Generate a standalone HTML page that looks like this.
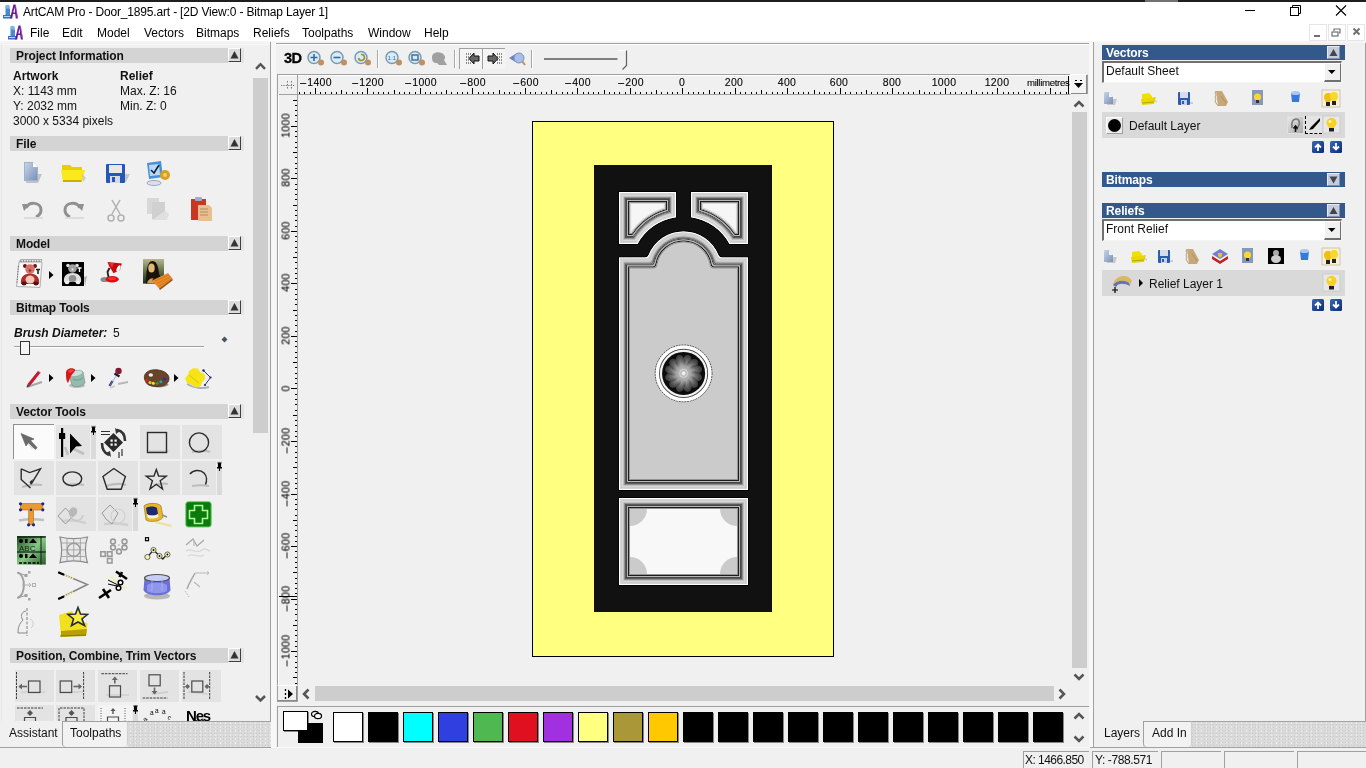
<!DOCTYPE html><html><head><meta charset="utf-8"><style>
*{margin:0;padding:0;box-sizing:border-box}
html,body{width:1366px;height:768px;overflow:hidden;background:#f0f0f0;font-family:"Liberation Sans",sans-serif}
.t{position:absolute;white-space:nowrap;will-change:transform}
svg{overflow:visible}
</style></head><body><div style="position:absolute;left:0px;top:0px;width:1366px;height:2px;background:#1e1e1e"></div>
<div style="position:absolute;left:1145px;top:0px;width:33px;height:2px;background:#707070"></div>
<div style="position:absolute;left:0px;top:2px;width:1366px;height:39px;background:#ffffff"></div>
<svg style="position:absolute;left:2px;top:3px;" width="16" height="16" viewBox="0 0 16 16">
    <ellipse cx="5.5" cy="4" rx="2.5" ry="2.2" fill="#7ab8e0"/>
    <rect x="3.5" y="5.5" width="4.5" height="7" fill="#4a88d0"/>
    <rect x="1" y="12" width="8.5" height="3.5" fill="#3a70c0"/>
    <rect x="2" y="13" width="6.5" height="1" fill="#b0d8f8"/>
    <path d="M8 15.5 L11.5 1.5 L13.5 1.5 L16 15.5 L13.8 15.5 L13.2 11 L11 11 L10.2 15.5 Z" fill="#6a1a90"/>
    <path d="M11.3 9.5 L12.5 4 L13 9.5 Z" fill="#fff"/>
    <path d="M13.5 2 L15.5 15" stroke="#b050d0" stroke-width=".7"/>
    </svg>
<div class="t" style="left:23px;top:6.34px;font-size:12px;line-height:12px;font-weight:normal;font-style:normal;color:#000;letter-spacing:-0.17px;color:#000">ArtCAM Pro - Door_1895.art - [2D View:0 - Bitmap Layer 1]</div>
<svg style="position:absolute;left:1240px;top:2px;" width="126" height="18" viewBox="0 0 126 18">
      <rect x="5" y="8" width="10" height="1" fill="#000"/>
      <rect x="50.5" y="5.5" width="8" height="8" fill="none" stroke="#000" stroke-width="1"/>
      <path d="M52.5 5.5 V3.5 H60.5 V11.5 H58.5" fill="none" stroke="#000" stroke-width="1"/>
      <path d="M96 3.5 L106 13.5 M106 3.5 L96 13.5" stroke="#000" stroke-width="1.1"/>
    </svg>
<svg style="position:absolute;left:7px;top:24px;" width="16" height="16" viewBox="0 0 16 16">
    <ellipse cx="5.5" cy="4" rx="2.5" ry="2.2" fill="#7ab8e0"/>
    <rect x="3.5" y="5.5" width="4.5" height="7" fill="#4a88d0"/>
    <rect x="1" y="12" width="8.5" height="3.5" fill="#3a70c0"/>
    <rect x="2" y="13" width="6.5" height="1" fill="#b0d8f8"/>
    <path d="M8 15.5 L11.5 1.5 L13.5 1.5 L16 15.5 L13.8 15.5 L13.2 11 L11 11 L10.2 15.5 Z" fill="#6a1a90"/>
    <path d="M11.3 9.5 L12.5 4 L13 9.5 Z" fill="#fff"/>
    <path d="M13.5 2 L15.5 15" stroke="#b050d0" stroke-width=".7"/>
    </svg>
<div class="t" style="left:30.2px;top:27.34px;font-size:12px;line-height:12px;font-weight:normal;font-style:normal;color:#000;">File</div>
<div class="t" style="left:62.4px;top:27.34px;font-size:12px;line-height:12px;font-weight:normal;font-style:normal;color:#000;">Edit</div>
<div class="t" style="left:96.6px;top:27.34px;font-size:12px;line-height:12px;font-weight:normal;font-style:normal;color:#000;">Model</div>
<div class="t" style="left:144px;top:27.34px;font-size:12px;line-height:12px;font-weight:normal;font-style:normal;color:#000;">Vectors</div>
<div class="t" style="left:196.2px;top:27.34px;font-size:12px;line-height:12px;font-weight:normal;font-style:normal;color:#000;">Bitmaps</div>
<div class="t" style="left:253.3px;top:27.34px;font-size:12px;line-height:12px;font-weight:normal;font-style:normal;color:#000;">Reliefs</div>
<div class="t" style="left:301.6px;top:27.34px;font-size:12px;line-height:12px;font-weight:normal;font-style:normal;color:#000;">Toolpaths</div>
<div class="t" style="left:367.5px;top:27.34px;font-size:12px;line-height:12px;font-weight:normal;font-style:normal;color:#000;">Window</div>
<div class="t" style="left:424px;top:27.34px;font-size:12px;line-height:12px;font-weight:normal;font-style:normal;color:#000;">Help</div>
<div style="position:absolute;left:1309px;top:24px;width:18px;height:17px;border:1px solid #e6e6e6;background:#fff"></div>
<div style="position:absolute;left:1328px;top:24px;width:18px;height:17px;border:1px solid #e6e6e6;background:#fff"></div>
<div style="position:absolute;left:1347px;top:24px;width:18px;height:17px;border:1px solid #e6e6e6;background:#fff"></div>
<svg style="position:absolute;left:1309px;top:24px;" width="58" height="17" viewBox="0 0 58 17">
      <rect x="5" y="11" width="6" height="2" fill="#707070"/>
      <rect x="23" y="8" width="6" height="4" fill="none" stroke="#707070" stroke-width="1.2"/>
      <path d="M25 7 V5 H31 V9 H30" fill="none" stroke="#707070" stroke-width="1.2"/>
      <path d="M44.5 4.5 L50.5 10.5 M50.5 4.5 L44.5 10.5" stroke="#707070" stroke-width="2"/>
    </svg>
<div style="position:absolute;left:0px;top:41px;width:1366px;height:2px;background:#f5f5f5"></div>
<svg width="0" height="0" style="position:absolute"><defs><linearGradient id="gblue" x1="0" y1="0" x2="1" y2="1"><stop offset="0" stop-color="#c8d4e8"/><stop offset="1" stop-color="#7890b8"/></linearGradient></defs></svg>
<div style="position:absolute;left:1px;top:44px;width:269px;height:677px;background:#f0f0f0;border-left:1px solid #e6e6e6;border-top:1px solid #f8f8f8"></div>
<div style="position:absolute;left:270px;top:42px;width:1px;height:706px;background:#a0a0a0"></div>
<div style="position:absolute;left:10px;top:48px;width:218px;height:15px;background:#d4d4d4"></div>
<div class="t" style="left:15.5px;top:49.84px;font-size:12px;line-height:12px;font-weight:bold;font-style:normal;color:#111;letter-spacing:-0.12px">Project Information</div>
<div style="position:absolute;left:228px;top:48px;width:13px;height:14px;background:#dcdcdc;border-left:1px solid #fff;border-top:1px solid #fff;border-right:1px solid #404040;border-bottom:1px solid #404040"></div>
<div style="position:absolute;left:241px;top:48px;width:3px;height:15px;background:#e4e4e4"></div>
<svg style="position:absolute;left:0px;top:0px;" width="250" height="70" viewBox="0 0 250 70"><path d="M234.5 51 L238.5 58.5 L230.5 58.5 Z" fill="#333"/></svg>
<div style="position:absolute;left:10px;top:136px;width:218px;height:15px;background:#d4d4d4"></div>
<div class="t" style="left:15.5px;top:137.84px;font-size:12px;line-height:12px;font-weight:bold;font-style:normal;color:#111;letter-spacing:-0.12px">File</div>
<div style="position:absolute;left:228px;top:136px;width:13px;height:14px;background:#dcdcdc;border-left:1px solid #fff;border-top:1px solid #fff;border-right:1px solid #404040;border-bottom:1px solid #404040"></div>
<div style="position:absolute;left:241px;top:136px;width:3px;height:15px;background:#e4e4e4"></div>
<svg style="position:absolute;left:0px;top:88px;" width="250" height="70" viewBox="0 0 250 70"><path d="M234.5 51 L238.5 58.5 L230.5 58.5 Z" fill="#333"/></svg>
<div style="position:absolute;left:10px;top:236px;width:218px;height:15px;background:#d4d4d4"></div>
<div class="t" style="left:15.5px;top:237.84px;font-size:12px;line-height:12px;font-weight:bold;font-style:normal;color:#111;letter-spacing:-0.12px">Model</div>
<div style="position:absolute;left:228px;top:236px;width:13px;height:14px;background:#dcdcdc;border-left:1px solid #fff;border-top:1px solid #fff;border-right:1px solid #404040;border-bottom:1px solid #404040"></div>
<div style="position:absolute;left:241px;top:236px;width:3px;height:15px;background:#e4e4e4"></div>
<svg style="position:absolute;left:0px;top:188px;" width="250" height="70" viewBox="0 0 250 70"><path d="M234.5 51 L238.5 58.5 L230.5 58.5 Z" fill="#333"/></svg>
<div style="position:absolute;left:10px;top:300px;width:218px;height:15px;background:#d4d4d4"></div>
<div class="t" style="left:15.5px;top:301.84px;font-size:12px;line-height:12px;font-weight:bold;font-style:normal;color:#111;letter-spacing:-0.12px">Bitmap Tools</div>
<div style="position:absolute;left:228px;top:300px;width:13px;height:14px;background:#dcdcdc;border-left:1px solid #fff;border-top:1px solid #fff;border-right:1px solid #404040;border-bottom:1px solid #404040"></div>
<div style="position:absolute;left:241px;top:300px;width:3px;height:15px;background:#e4e4e4"></div>
<svg style="position:absolute;left:0px;top:252px;" width="250" height="70" viewBox="0 0 250 70"><path d="M234.5 51 L238.5 58.5 L230.5 58.5 Z" fill="#333"/></svg>
<div style="position:absolute;left:10px;top:404px;width:218px;height:15px;background:#d4d4d4"></div>
<div class="t" style="left:15.5px;top:405.84px;font-size:12px;line-height:12px;font-weight:bold;font-style:normal;color:#111;letter-spacing:-0.12px">Vector Tools</div>
<div style="position:absolute;left:228px;top:404px;width:13px;height:14px;background:#dcdcdc;border-left:1px solid #fff;border-top:1px solid #fff;border-right:1px solid #404040;border-bottom:1px solid #404040"></div>
<div style="position:absolute;left:241px;top:404px;width:3px;height:15px;background:#e4e4e4"></div>
<svg style="position:absolute;left:0px;top:356px;" width="250" height="70" viewBox="0 0 250 70"><path d="M234.5 51 L238.5 58.5 L230.5 58.5 Z" fill="#333"/></svg>
<div style="position:absolute;left:10px;top:648px;width:218px;height:15px;background:#d4d4d4"></div>
<div class="t" style="left:15.5px;top:649.84px;font-size:12px;line-height:12px;font-weight:bold;font-style:normal;color:#111;letter-spacing:-0.12px">Position, Combine, Trim Vectors</div>
<div style="position:absolute;left:228px;top:648px;width:13px;height:14px;background:#dcdcdc;border-left:1px solid #fff;border-top:1px solid #fff;border-right:1px solid #404040;border-bottom:1px solid #404040"></div>
<div style="position:absolute;left:241px;top:648px;width:3px;height:15px;background:#e4e4e4"></div>
<svg style="position:absolute;left:0px;top:600px;" width="250" height="70" viewBox="0 0 250 70"><path d="M234.5 51 L238.5 58.5 L230.5 58.5 Z" fill="#333"/></svg>
<div class="t" style="left:13px;top:69.84px;font-size:12px;line-height:12px;font-weight:bold;font-style:normal;color:#111;">Artwork</div>
<div class="t" style="left:13px;top:84.84px;font-size:12px;line-height:12px;font-weight:normal;font-style:normal;color:#111;">X: 1143 mm</div>
<div class="t" style="left:13px;top:99.84px;font-size:12px;line-height:12px;font-weight:normal;font-style:normal;color:#111;">Y: 2032 mm</div>
<div class="t" style="left:13px;top:114.84px;font-size:12px;line-height:12px;font-weight:normal;font-style:normal;color:#111;">3000 x 5334 pixels</div>
<div class="t" style="left:119.5px;top:69.84px;font-size:12px;line-height:12px;font-weight:bold;font-style:normal;color:#111;">Relief</div>
<div class="t" style="left:119.5px;top:84.84px;font-size:12px;line-height:12px;font-weight:normal;font-style:normal;color:#111;">Max. Z: 16</div>
<div class="t" style="left:119.5px;top:99.84px;font-size:12px;line-height:12px;font-weight:normal;font-style:normal;color:#111;">Min. Z: 0</div>
<div style="position:absolute;left:253px;top:78px;width:15px;height:355px;background:#cdcdcd"></div>
<svg style="position:absolute;left:255px;top:60px;" width="12" height="10" viewBox="0 0 12 10"><path d="M1 8.8 L5.5 4.2 L10 8.8" stroke="#555" stroke-width="2.5" fill="none"/></svg>
<svg style="position:absolute;left:255px;top:694px;" width="12" height="10" viewBox="0 0 12 10"><path d="M1 2 L5.5 6.5 L10 2" stroke="#555" stroke-width="2.5" fill="none"/></svg>
<svg style="position:absolute;left:20px;top:160px;" width="26" height="26" viewBox="0 0 26 26"><path d="M4 2 H13 L18 7 V21 H4 Z" fill="#9fb2cf"/><path d="M5 3 H12 V8 H17 V20 H5Z" fill="url(#gblue)"/>
<path d="M13 2 L18 7 H13Z" fill="#fff"/><path d="M18 14 H22 L18 23 H6 V21 H18Z" fill="#b8b8b8" opacity=".8"/></svg>
<svg style="position:absolute;left:60px;top:160px;" width="26" height="26" viewBox="0 0 26 26"><path d="M2 5 H10 L12 7 H22 V12 H2Z" fill="#e8d000"/><path d="M1 10 H25 L22 22 H3Z" fill="#f8e81c"/>
<path d="M3 20 H22 L21 22 H3Z" fill="#c8b000"/><path d="M22 14 L26 18 L23 22Z" fill="#bbb" opacity=".7"/></svg>
<svg style="position:absolute;left:104px;top:161px;" width="26" height="26" viewBox="0 0 26 26"><rect x="2" y="3" width="19" height="19" rx="1" fill="#2458b8"/><rect x="5" y="4" width="13" height="8" fill="#e8e8e8"/>
<rect x="6" y="15" width="10" height="7" fill="#d8d8e8"/><rect x="8" y="16" width="3" height="5" fill="#2458b8"/>
<path d="M21 13 H26 L22 21 H21Z" fill="#bbb" opacity=".8"/></svg>
<svg style="position:absolute;left:144px;top:160px;" width="26" height="26" viewBox="0 0 26 26"><path d="M3 3 L17 1 L19 17 L5 19Z" fill="#4a90d8"/><path d="M5 5 L15 4 L16 15 L6 16Z" fill="#b8daf8"/>
<path d="M7 10 L10 13 L15 5" stroke="#123" stroke-width="1.6" fill="none"/>
<ellipse cx="10" cy="23" rx="7" ry="2.5" fill="#d8e0f0" stroke="#8898b8" stroke-width=".8"/>
<circle cx="21" cy="15" r="5" fill="#d8a020"/><circle cx="21" cy="15" r="2" fill="#f0d070"/></svg>
<svg style="position:absolute;left:21px;top:197px;" width="26" height="26" viewBox="0 0 26 26"><path d="M5 11 C8 4 20 5 20 13 C20 17 17 19 15 20" stroke="#909090" stroke-width="3" fill="none"/>
<path d="M1 7 L9 7 L3 14Z" fill="#909090"/><path d="M3 21 H22" stroke="#ddd" stroke-width="2"/></svg>
<svg style="position:absolute;left:62px;top:197px;" width="26" height="26" viewBox="0 0 26 26"><path d="M18 11 C15 4 3 5 3 13 C3 17 6 19 8 20" stroke="#909090" stroke-width="3" fill="none"/>
<path d="M22 7 L14 7 L20 14Z" fill="#909090"/><path d="M3 21 H22" stroke="#ddd" stroke-width="2"/></svg>
<svg style="position:absolute;left:106px;top:198px;" width="26" height="26" viewBox="0 0 26 26"><path d="M6 2 L14 16 M14 2 L6 16" stroke="#b0b0b0" stroke-width="1.5"/>
<circle cx="5" cy="20" r="3" fill="none" stroke="#b0b0b0" stroke-width="1.5"/><circle cx="15" cy="20" r="3" fill="none" stroke="#b0b0b0" stroke-width="1.5"/></svg>
<svg style="position:absolute;left:146px;top:197px;" width="26" height="26" viewBox="0 0 26 26"><rect x="1" y="1" width="12" height="16" fill="#d8d8d8"/><rect x="6" y="5" width="13" height="17" fill="#d0d0d0"/>
<path d="M19 14 L23 17 L21 23 H6Z" fill="#e0e0e0"/></svg>
<svg style="position:absolute;left:190px;top:196px;" width="26" height="26" viewBox="0 0 26 26"><rect x="1" y="3" width="15" height="21" fill="#c83820"/><rect x="5" y="1" width="7" height="4" rx="1" fill="#a8a8c8"/>
<path d="M8 9 H19 L22 12 V25 H8Z" fill="#e8c090"/><path d="M10 13 H18 M10 16 H18 M10 19 H18" stroke="#a88060" stroke-width=".8"/></svg>
<svg style="position:absolute;left:15px;top:258px;" width="32" height="32" viewBox="0 0 32 32"><path d="M4.5 4 L5.5 1.5 L27 1.5 L26 4 Z" fill="#f0f0f0" stroke="#909090" stroke-width=".7"/>
<path d="M1.5 28.5 L4 4 L27 4 L25 29.5 Z" fill="#f4f4f4" stroke="#a0a0a0" stroke-width=".8"/>
<path d="M5.5 3 H26" stroke="#404040" stroke-width="1" stroke-dasharray="1 1.6"/><path d="M3.3 8 L2 26" stroke="#606060" stroke-width="1" stroke-dasharray="1 1.6"/>
<path d="M6 6 H25 L23.5 27.5 H5 Z" fill="#fff"/>
<circle cx="10" cy="8" r="2" fill="#6a1010"/><circle cx="20" cy="8" r="2" fill="#6a1010"/>
<circle cx="15" cy="11" r="4.8" fill="#d87068"/><circle cx="15" cy="12.5" r="1.2" fill="#803030"/>
<path d="M6 26 C5 19 9 15.5 15 15.5 C21 15.5 25 19 24 26 Z" fill="#a83028"/>
<ellipse cx="15" cy="21.5" rx="4.5" ry="4" fill="#f0c8c0"/><ellipse cx="9" cy="25.5" rx="2.5" ry="2" fill="#5a1010"/><ellipse cx="21" cy="25.5" rx="2.5" ry="2" fill="#5a1010"/>
<path d="M21 11.5 H25 M23 11.5 V16" stroke="#202020" stroke-width="1.6"/></svg>
<svg style="position:absolute;left:49px;top:271px;" width="5" height="8" viewBox="0 0 5 8"><path d="M0 0 L4.5 4 L0 8 Z" fill="#000"/></svg>
<svg style="position:absolute;left:62px;top:262px;" width="26" height="26" viewBox="0 0 26 26"><path d="M22 15 L25 14 L23 24 Z" fill="#b0b0b0"/><rect x="0" y="0" width="22" height="24" fill="#000"/>
<circle cx="6" cy="3.5" r="1.8" fill="#e0e0e0"/><circle cx="15" cy="3.5" r="1.8" fill="#e0e0e0"/>
<circle cx="10.5" cy="6.5" r="4.3" fill="#a0a0a0"/><circle cx="10.5" cy="7.5" r="1" fill="#e8e8e8"/>
<path d="M2 20 C1 14 5 11 10.5 11 C16 11 20 14 19 20 Z" fill="#e0e0e0"/>
<ellipse cx="10.5" cy="16.5" rx="3.8" ry="3.5" fill="#909090"/><ellipse cx="5" cy="20.5" rx="2.3" ry="1.8" fill="#f0f0f0"/><ellipse cx="16" cy="20.5" rx="2.3" ry="1.8" fill="#f0f0f0"/>
<path d="M15.5 6 H19.5 M17.5 6 V10" stroke="#fff" stroke-width="1.3"/></svg>
<svg style="position:absolute;left:100px;top:260px;" width="30" height="26" viewBox="0 0 30 26"><ellipse cx="5" cy="19.5" rx="4.5" ry="2.6" fill="#606060" opacity=".7"/><ellipse cx="12.2" cy="19.2" rx="6.5" ry="3.2" fill="#d81010"/><ellipse cx="12" cy="18.5" rx="4" ry="1.5" fill="#f03030"/>
<path d="M8.5 17 L7.5 12 L9.5 8" stroke="#202020" stroke-width="1.8" fill="none"/><path d="M7.5 2 L21.8 3.5 L20 10 L13.6 13.3 L9 6 Z" fill="#c80808"/><path d="M9 3 L14 3 L12 8Z" fill="#e83030"/><ellipse cx="18.5" cy="8.5" rx="1.6" ry="3.5" fill="#fff" transform="rotate(25 18.5 8.5)"/></svg>
<svg style="position:absolute;left:143px;top:258px;" width="30" height="32" viewBox="0 0 30 32"><defs><linearGradient id="gml" x1="0" y1="0" x2="0" y2="1"><stop offset="0" stop-color="#b8b890"/><stop offset=".5" stop-color="#607048"/><stop offset="1" stop-color="#202818"/></linearGradient></defs>
<rect x="0" y="1" width="21" height="24.6" fill="url(#gml)"/><path d="M3 25.6 C3 14 4 3 9.5 3 C15 3 16 12 17 25.6Z" fill="#1a1408"/><ellipse cx="8.5" cy="10" rx="3.2" ry="4.5" fill="#e0b878"/><path d="M4 25.6 C5 19 13 18 18 25.6Z" fill="#c8a060"/><path d="M10 23 C12 19 14 18 17 18" stroke="#1a1408" stroke-width="2" fill="none"/>
<path d="M9 22.5 L25 15 L29.5 20.5 L16 30.5 Z" fill="#e88a28"/><path d="M16 30.5 L29.5 20.5 L29.5 22.5 L17 32 Z" fill="#9a5010"/><path d="M12 23 L26 17 M14 25.5 L27.5 19 M16 28 L28.5 21" stroke="#c86a10" stroke-width=".6"/></svg>
<div class="t" style="left:13.9px;top:326.84px;font-size:12px;line-height:12px;font-weight:bold;font-style:italic;color:#111;">Brush Diameter:</div>
<div class="t" style="left:113px;top:326.84px;font-size:12px;line-height:12px;font-weight:normal;font-style:normal;color:#111;">5</div>
<div style="position:absolute;left:14px;top:346px;width:190px;height:1px;background:#a0a0a0"></div>
<div style="position:absolute;left:14px;top:347px;width:190px;height:1px;background:#fff"></div>
<div style="position:absolute;left:20px;top:341px;width:10px;height:14px;background:#f4f4f4;border:1px solid #333"></div>
<svg style="position:absolute;left:221px;top:336px;" width="7" height="7" viewBox="0 0 7 7"><path d="M3.5 0.5 L6.5 3.5 L3.5 6.5 L0.5 3.5Z" fill="#456"/></svg>
<svg style="position:absolute;left:23px;top:368px;" width="22" height="22" viewBox="0 0 22 22"><path d="M4 19 L19 14" stroke="#a8a8a8" stroke-width="2.2"/><path d="M4.5 16 L15 3 L17.5 4.8 L7 18 Z" fill="#c81830"/><path d="M15 3 L17.5 4.8" stroke="#e86070" stroke-width="1"/><path d="M4.5 16 L7 18 L3.5 19.5 Z" fill="#404040"/></svg>
<svg style="position:absolute;left:49px;top:374px;" width="5" height="8" viewBox="0 0 5 8"><path d="M0 0 L4.5 4 L0 8 Z" fill="#000"/></svg>
<svg style="position:absolute;left:63px;top:367px;" width="24" height="22" viewBox="0 0 24 22"><ellipse cx="14" cy="18.5" rx="8" ry="2.5" fill="#a8a8a8" opacity=".7"/>
<path d="M6 8 L20 5 L22 16 C19 20 11 21 9 18 Z" fill="#98b8b0" stroke="#708880" stroke-width=".6"/><ellipse cx="13" cy="6.5" rx="7" ry="3" fill="#c8e0d8" stroke="#80a098" stroke-width=".6" transform="rotate(-12 13 6.5)"/>
<path d="M10 12 C13 14 17 13 20 11" stroke="#60b090" stroke-width="1.2" fill="none"/>
<path d="M3 6 C3 1 10 0 12.5 3 L8 9 L5 16 C3 14 3 10 3 6 Z" fill="#d81818"/><path d="M5 4 C7 2 10 2 11 3.5 L7 6Z" fill="#f04040"/></svg>
<svg style="position:absolute;left:91px;top:374px;" width="5" height="8" viewBox="0 0 5 8"><path d="M0 0 L4.5 4 L0 8 Z" fill="#000"/></svg>
<svg style="position:absolute;left:107px;top:367px;" width="22" height="22" viewBox="0 0 22 22"><path d="M11 17 L21 15" stroke="#b8b8b8" stroke-width="2.2"/><path d="M3 21 L8 19" stroke="#c8c8c8" stroke-width="1.5"/>
<path d="M9.5 8.5 L2.5 19" stroke="#e8e8f8" stroke-width="3.2"/><path d="M5.5 14 L2.5 19" stroke="#303888" stroke-width="2.4"/><path d="M9.5 8.5 L2.5 19" stroke="#8890a8" stroke-width=".6" fill="none"/>
<path d="M7.5 6.5 L12.5 9.5" stroke="#202020" stroke-width="2.2"/><circle cx="11.5" cy="4" r="3.2" fill="#801838"/></svg>
<svg style="position:absolute;left:143px;top:368px;" width="28" height="22" viewBox="0 0 28 22"><path d="M3 14 C6 19 20 20 25 16" stroke="#909090" stroke-width="2" fill="none"/>
<path d="M1.5 11 C0 4 8 1 14 1.8 C21 2.5 26.5 6 26 11 C25.5 16 21 18.5 14 18.5 C7 18.5 3 16 1.5 11 Z" fill="#6a4428" stroke="#4a2c18" stroke-width=".8"/>
<ellipse cx="7.8" cy="7" rx="2.2" ry="1.8" fill="#f0f0f0"/>
<circle cx="3.8" cy="12" r="1.5" fill="#e02020"/><circle cx="7" cy="14.5" r="1.5" fill="#f0d020"/><circle cx="10.3" cy="15.2" r="1.5" fill="#f0e030"/><circle cx="14" cy="15.2" r="1.5" fill="#30a030"/><circle cx="17.8" cy="13.8" r="1.5" fill="#20a8a0"/><circle cx="21.5" cy="11" r="1.6" fill="#2030c0"/></svg>
<svg style="position:absolute;left:174px;top:374px;" width="5" height="8" viewBox="0 0 5 8"><path d="M0 0 L4.5 4 L0 8 Z" fill="#000"/></svg>
<svg style="position:absolute;left:185px;top:367px;" width="30" height="24" viewBox="0 0 30 24"><path d="M2 17 C8 21 18 22 24 20" stroke="#b0b0c0" stroke-width="2" fill="none"/>
<path d="M8 1.2 L13 1.5 L15 5 L19.5 7 L20 12 L17 15 L16 19 L11 20.5 L7 18 L2 16 L0 11 L3 8 L4 4 Z" fill="#f4e418"/>
<path d="M4 8 L14 16" stroke="#e8d000" stroke-width="1.5"/>
<path d="M18.5 3.5 L25.5 10.5 L20 18" fill="none" stroke="#283880" stroke-width="1"/><circle cx="18.5" cy="3.5" r="1.2" fill="#202860"/><circle cx="25.5" cy="10.5" r="1.1" fill="#202860"/><circle cx="20" cy="18" r="1.1" fill="#202860"/></svg>
<div style="position:absolute;left:13px;top:424px;width:41px;height:35px;background:#fbfbfb;border-top:1px solid #909090;border-left:1px solid #909090"></div>
<svg style="position:absolute;left:14px;top:425px;" width="40" height="34" viewBox="0 0 40 34"><path d="M10 14 L18 24 L22 22 Z" fill="#c8c8c8" opacity=".7"/><path d="M7 8.5 L20 14 L16.5 15.5 L23 22.5 L21.5 24.5 L14.5 17.5 L12 21 Z" fill="#6a6a6a" stroke="#555" stroke-width=".6"/></svg>
<div style="position:absolute;left:56px;top:425px;width:34px;height:34px;background:#e3e3e3"></div>
<div style="position:absolute;left:91px;top:425px;width:5px;height:34px;background:#dadada"></div>
<svg style="position:absolute;left:90px;top:426px;" width="7" height="9" viewBox="0 0 7 9"><path d="M1.5 1 H5.5 M2.5 1.5 H4.5 L4.5 4.5 L6 6 H1 L2.5 4.5 Z M3.5 6 V9" stroke="#000" stroke-width="1" fill="#000"/></svg>
<svg style="position:absolute;left:56px;top:425px;" width="40" height="34" viewBox="0 0 40 34"><path d="M9 22 L12 30" stroke="#c0c0c0" stroke-width="2.5"/><path d="M18 24 L28 29" stroke="#c0c0c0" stroke-width="3"/><rect x="5" y="3" width="2.2" height="29" fill="#000"/><rect x="3" y="8" width="6.2" height="6" fill="#000"/><path d="M14 8.5 L26 21 L20 21.5 L14 28.5 Z" fill="#000"/></svg>
<svg style="position:absolute;left:98px;top:425px;" width="40" height="34" viewBox="0 0 40 34"><path d="M15.5 8 L25 17.5 L15.5 27 L6 17.5 Z" fill="#2a2a2a"/><rect x="12.5" y="14.5" width="2.2" height="2.2" fill="#fff"/><rect x="16.5" y="14.5" width="2.2" height="2.2" fill="#fff"/><rect x="12.5" y="18.5" width="2.2" height="2.2" fill="#fff"/><rect x="16.5" y="18.5" width="2.2" height="2.2" fill="#fff"/><path d="M19 5 C25 6 27 10 27 16" stroke="#333" stroke-width="2.6" fill="none"/><path d="M17 3 L22 6 L18 9 Z" fill="#333"/><path d="M11 30 C6 28 4 24 4 18" stroke="#333" stroke-width="2.6" fill="none"/><path d="M13 32 L8 28 L12 26 Z" fill="#333"/><path d="M3 6.5 H12 M3 9.5 H12" stroke="#333" stroke-width="1.2"/><path d="M21 27 V33 M24 24 V31" stroke="#333" stroke-width="1.2"/></svg>
<div style="position:absolute;left:140px;top:425px;width:40px;height:34px;background:#e3e3e3"></div>
<svg style="position:absolute;left:140px;top:425px;" width="40" height="34" viewBox="0 0 40 34"><path d="M9 25.5 H29 L27 28 H9Z" fill="#c4c4c4"/><rect x="7.5" y="7.5" width="19" height="20" fill="none" stroke="#2a2a2a" stroke-width="1.4"/></svg>
<div style="position:absolute;left:182px;top:425px;width:40px;height:34px;background:#e3e3e3"></div>
<svg style="position:absolute;left:182px;top:425px;" width="40" height="34" viewBox="0 0 40 34"><path d="M10 27 C16 26 24 25 28 27" stroke="#bdbdbd" stroke-width="2.2" fill="none"/><circle cx="17" cy="17.5" r="9.6" fill="none" stroke="#2a2a2a" stroke-width="1.4"/></svg>
<div style="position:absolute;left:14px;top:461px;width:40px;height:34px;background:#e3e3e3"></div>
<svg style="position:absolute;left:14px;top:461px;" width="40" height="34" viewBox="0 0 40 34"><path d="M8 26 C14 24 22 23 28 24" stroke="#bdbdbd" stroke-width="2.2" fill="none"/><path d="M7.2 7.8 L15.6 11.6 L26.5 7.8 L17.2 23.2 M7.2 7.8 V18.5 L16.5 27" fill="none" stroke="#2a2a2a" stroke-width="1.4"/><path d="M15.5 21 L19 18 L17 24 Z" fill="#2a2a2a"/></svg>
<div style="position:absolute;left:56px;top:461px;width:40px;height:34px;background:#e3e3e3"></div>
<svg style="position:absolute;left:56px;top:461px;" width="40" height="34" viewBox="0 0 40 34"><path d="M10 24 C16 23 24 23 28 24" stroke="#bdbdbd" stroke-width="2.2" fill="none"/><ellipse cx="16.3" cy="17.8" rx="9.4" ry="6.9" fill="none" stroke="#2a2a2a" stroke-width="1.4"/></svg>
<div style="position:absolute;left:98px;top:461px;width:40px;height:34px;background:#e3e3e3"></div>
<svg style="position:absolute;left:98px;top:461px;" width="40" height="34" viewBox="0 0 40 34"><path d="M8 25 C14 23 22 22 28 24" stroke="#bdbdbd" stroke-width="2.2" fill="none"/><path d="M15.8 7.5 L27.4 15.5 L23.2 28.2 L9.2 28.2 L5 15.5 Z" fill="none" stroke="#2a2a2a" stroke-width="1.4"/></svg>
<div style="position:absolute;left:140px;top:461px;width:40px;height:34px;background:#e3e3e3"></div>
<svg style="position:absolute;left:140px;top:461px;" width="40" height="34" viewBox="0 0 40 34"><path d="M14 24 C20 23 24 22 28 23" stroke="#bdbdbd" stroke-width="2.2" fill="none"/><path d="M16.3 8.5 L18.6 15 L26.3 15.2 L20.2 19.8 L22.5 28 L16.3 23.3 L10 28 L12.4 19.8 L6.2 15.2 L14 15 Z" fill="none" stroke="#2a2a2a" stroke-width="1.4"/></svg>
<div style="position:absolute;left:182px;top:461px;width:34px;height:34px;background:#e3e3e3"></div>
<div style="position:absolute;left:217px;top:461px;width:5px;height:34px;background:#dadada"></div>
<svg style="position:absolute;left:216px;top:462px;" width="7" height="9" viewBox="0 0 7 9"><path d="M1.5 1 H5.5 M2.5 1.5 H4.5 L4.5 4.5 L6 6 H1 L2.5 4.5 Z M3.5 6 V9" stroke="#000" stroke-width="1" fill="#000"/></svg>
<svg style="position:absolute;left:182px;top:461px;" width="40" height="34" viewBox="0 0 40 34"><path d="M10 25 C16 24 22 24 27 25" stroke="#bdbdbd" stroke-width="2.2" fill="none"/><path d="M8 13 C11 9 18 8 22 12 C25 15 25 20 23.5 23.5" fill="none" stroke="#2a2a2a" stroke-width="1.5"/></svg>
<svg style="position:absolute;left:14px;top:497px;" width="40" height="34" viewBox="0 0 40 34"><path d="M5 23.5 C12 22 22 22 30 23" stroke="#c0c0c0" stroke-width="2.5" fill="none"/><path d="M6.5 6.5 H28.8 V13 H19.5 V27.8 H14.6 V13 H6.5 Z" fill="#e89a30" stroke="#b06818" stroke-width=".6"/><g fill="#1a2a80"><circle cx="6.5" cy="6.8" r="1.6"/><circle cx="28.8" cy="6.8" r="1.6"/><circle cx="6.5" cy="12.8" r="1.6"/><circle cx="28.8" cy="12.8" r="1.6"/><circle cx="14.6" cy="27.8" r="1.6"/><circle cx="19.5" cy="27.8" r="1.6"/><circle cx="17" cy="12.8" r="1.3"/></g></svg>
<div style="position:absolute;left:56px;top:497px;width:40px;height:34px;background:#e3e3e3"></div>
<svg style="position:absolute;left:56px;top:497px;" width="40" height="34" viewBox="0 0 40 34"><path d="M6 24 C14 23 24 24 30 26" stroke="#d0d0d0" stroke-width="2.5" fill="none"/><path d="M2 19 L9.5 11 L17 19 L9.5 27 Z" fill="none" stroke="#9a9a9a" stroke-width="1"/><ellipse cx="17" cy="15" rx="4" ry="5" fill="#b8b8b8" transform="rotate(30 17 15)"/><path d="M14 19 C18 26 26 24 27 18" fill="none" stroke="#c8c8c8" stroke-width="1.5"/></svg>
<div style="position:absolute;left:98px;top:497px;width:34px;height:34px;background:#e3e3e3"></div>
<div style="position:absolute;left:133px;top:497px;width:5px;height:34px;background:#dadada"></div>
<svg style="position:absolute;left:132px;top:498px;" width="7" height="9" viewBox="0 0 7 9"><path d="M1.5 1 H5.5 M2.5 1.5 H4.5 L4.5 4.5 L6 6 H1 L2.5 4.5 Z M3.5 6 V9" stroke="#000" stroke-width="1" fill="#000"/></svg>
<svg style="position:absolute;left:98px;top:497px;" width="40" height="34" viewBox="0 0 40 34"><path d="M6 27 C14 26 24 27 30 28" stroke="#d0d0d0" stroke-width="2.5" fill="none"/><path d="M4 16 L12 8 L20 16 L14 27 L8 22 Z" fill="none" stroke="#9a9a9a" stroke-width="1"/><circle cx="20" cy="19" r="7" fill="none" stroke="#d0d0d0" stroke-width="1.2"/></svg>
<svg style="position:absolute;left:140px;top:497px;" width="40" height="34" viewBox="0 0 40 34"><path d="M16 24 L32 28 L31 30 L15 26 Z" fill="#f0e0a0"/><path d="M4 9 C6 6 18 5 21 9 L23 20 C22 24 10 26 6 23 Z" fill="#e8b828" stroke="#8a6a10" stroke-width=".6"/><path d="M6 11 C9 9 15 9 17 11 L18 17 C14 19 9 19 7 17 Z" fill="#1e2a70"/><path d="M7 17 C10 19 15 19 18 17 L18.5 20 C14 22 9 22 7.5 20 Z" fill="#f0f0f0"/><path d="M22 18 L27 20" stroke="#909090" stroke-width="1.5"/></svg>
<svg style="position:absolute;left:182px;top:497px;" width="40" height="34" viewBox="0 0 40 34"><rect x="3.8" y="4.7" width="25.4" height="25.3" rx="2.5" fill="#0a7a0a" stroke="#70d070" stroke-width="1"/><path d="M12.5 8.5 H20.5 V13.5 H25.5 V21.5 H20.5 V26.5 H12.5 V21.5 H7.5 V13.5 H12.5 Z" fill="none" stroke="#b0f8a0" stroke-width="1.6"/></svg>
<svg style="position:absolute;left:14px;top:533px;" width="40" height="34" viewBox="0 0 40 34"><defs><linearGradient id="gabc" x1="0" y1="0" x2="1" y2="1"><stop offset="0" stop-color="#1a4a1a"/><stop offset=".5" stop-color="#88c888"/><stop offset="1" stop-color="#2a5a2a"/></linearGradient></defs><rect x="3" y="3.2" width="28.8" height="28.4" fill="url(#gabc)"/><rect x="3" y="3.2" width="28.8" height="1.5" fill="#0a200a"/><path d="M3 19 H31.8" stroke="#0a200a" stroke-width="1.2"/><path d="M27 3 V31.6" stroke="#0a200a" stroke-width="1"/><circle cx="7" cy="8" r="2" fill="#000"/><rect x="11" y="6" width="2.5" height="4" fill="#000"/><path d="M15 10 L19 5.5 L23 10 Z" fill="#000"/><text x="5" y="17.5" font-size="8" fill="#062006" font-family="Liberation Sans">ABC</text><circle cx="7" cy="23" r="2" fill="#000"/><rect x="11" y="21" width="2.5" height="4" fill="#000"/><path d="M15 25 L19 20.5 L23 25 Z" fill="#000"/><path d="M5 30 H25" stroke="#000" stroke-width="1.5" stroke-dasharray="3 1.5"/></svg>
<svg style="position:absolute;left:56px;top:533px;" width="40" height="34" viewBox="0 0 40 34"><path d="M4 4 C12 6 23 6 31.4 4 C29 12 29 22 31.4 29.6 C23 27.5 12 27.5 4 29.6 C6 22 6 12 4 4 Z" fill="#e8e8e8" stroke="#8a8a8a" stroke-width="1.2"/><path d="M11 5 V28 M17.7 5.3 V28 M24.4 5 V28 M5.2 10 H30 M5.5 16.8 H29.5 M5.2 23.5 H30" stroke="#9a9a9a" stroke-width=".8"/><circle cx="17.7" cy="16.8" r="6.5" fill="none" stroke="#9a9a9a" stroke-width="1.4"/></svg>
<svg style="position:absolute;left:98px;top:533px;" width="40" height="34" viewBox="0 0 40 34"><g fill="none" stroke="#9a9a9a" stroke-width="1.6"><rect x="2.8" y="18.8" width="4.5" height="4.5"/><rect x="9.5" y="18.8" width="4.5" height="4.5"/><rect x="9.5" y="25.5" width="4.5" height="4.5"/><circle cx="15" cy="8.5" r="2.4"/><circle cx="26.5" cy="8.5" r="2.4"/><circle cx="15" cy="14.5" r="2.4"/><circle cx="26.5" cy="14.5" r="2.4"/><circle cx="21" cy="18.5" r="2.4"/></g><circle cx="20.8" cy="12" r=".8" fill="#9a9a9a"/></svg>
<svg style="position:absolute;left:140px;top:533px;" width="40" height="34" viewBox="0 0 40 34"><rect x="5.5" y="4.7" width="3" height="3" fill="none" stroke="#000" stroke-width="1.2"/><path d="M7.4 24 L13.5 17 L19.5 23 L22.8 26 L27.4 21" fill="none" stroke="#222" stroke-width="1.3"/><g fill="#f4f4b0" stroke="#333" stroke-width=".7"><circle cx="7.4" cy="24" r="2.6"/><circle cx="13.5" cy="17" r="2.6"/><circle cx="19.5" cy="23" r="2.6"/><circle cx="27.4" cy="21.5" r="2.6"/></g><g fill="#000"><circle cx="13.5" cy="17" r=".9"/><circle cx="19.5" cy="23" r=".9"/><circle cx="27.4" cy="21.5" r=".9"/></g></svg>
<svg style="position:absolute;left:182px;top:533px;" width="40" height="34" viewBox="0 0 40 34"><path d="M4 12 L11 6 L15 13 L22 7" fill="none" stroke="#a8a8a8" stroke-width="1.2"/><path d="M12 8 V13" stroke="#b0b0b0" stroke-width="1"/><path d="M4 18 C9 14 14 22 20 17 C24 14 26 18 28 18 M6 23 C11 19 16 26 22 22" fill="none" stroke="#d8d8d8" stroke-width="1.3"/></svg>
<svg style="position:absolute;left:14px;top:569px;" width="40" height="34" viewBox="0 0 40 34"><path d="M3.5 3.5 C12 6 12 26 3.5 29" fill="none" stroke="#a0a0a0" stroke-width="2"/><path d="M3 3.5 L12 6.5 M3 29 L12 26.5" stroke="#a0a0a0" stroke-width="1"/><rect x="10.5" y="5" width="3" height="3" fill="#a0a0a0"/><rect x="10.5" y="25" width="3" height="3" fill="#a0a0a0"/><rect x="14" y="2" width="2.5" height="2.5" fill="#a8a8a8"/><rect x="14" y="29" width="2.5" height="2.5" fill="#a8a8a8"/><path d="M8 16 H17 M15 14 L17 16 L15 18" stroke="#b0b0b0" stroke-width="1" fill="none"/><rect x="18.5" y="14.5" width="3" height="3" fill="none" stroke="#b0b0b0" stroke-width="1"/></svg>
<svg style="position:absolute;left:56px;top:569px;" width="40" height="34" viewBox="0 0 40 34"><path d="M2.2 3.2 L31.4 15.5 L2.2 30" fill="none" stroke="#888" stroke-width="1.6"/><path d="M2.2 3.2 L8 5.8 M2.2 30 L8 27.5" stroke="#000" stroke-width="2.2"/><path d="M9 6 L18 9.8 M9 27 L18 22.7" stroke="#eef0a0" stroke-width="2" stroke-dasharray="1.5 1"/></svg>
<svg style="position:absolute;left:98px;top:569px;" width="40" height="34" viewBox="0 0 40 34"><path d="M13 8 L28 20" stroke="#eef0b0" stroke-width="3" stroke-dasharray="2 1"/><path d="M18 2.5 L29 10 M24 3 L21.5 8" stroke="#000" stroke-width="2.6"/><path d="M1 29 L13 21 M5 20 L11 29" stroke="#000" stroke-width="2.6"/><g fill="#fff" stroke="#000" stroke-width="1.5"><circle cx="22.5" cy="13.5" r="2.3"/><circle cx="20.5" cy="19" r="2.3"/></g><path d="M10 11 L20 16 M10 15 L19 17" stroke="#000" stroke-width="1"/></svg>
<svg style="position:absolute;left:140px;top:569px;" width="40" height="34" viewBox="0 0 40 34"><ellipse cx="17" cy="27" rx="13" ry="3.5" fill="#a0a0a0" opacity=".7"/><path d="M4.5 9 L3.5 21 C6 28 28 28 30.5 21 L29.5 9 Z" fill="#6a70d8"/><path d="M7 16 C12 13 22 13 27 16 L27 22 C22 25 12 25 7 22 Z" fill="#9aa0f0" opacity=".8"/><ellipse cx="17" cy="9" rx="12.5" ry="3.5" fill="#c8ccf8" stroke="#505050" stroke-width="1.2"/><path d="M12 9 V22 M22 9 V22" stroke="#b8c0f8" stroke-width="1" opacity=".6"/></svg>
<svg style="position:absolute;left:182px;top:569px;" width="40" height="34" viewBox="0 0 40 34"><path d="M13 4 C10 10 7 14 5 20" fill="none" stroke="#a8a8a8" stroke-width="1.5"/><path d="M13 4 H27 M25 2.5 L27 4 L25 5.5" stroke="#b8b8b8" stroke-width="1" fill="none"/><path d="M12 13 L18 18" stroke="#b8b8b8" stroke-width="1.2"/><path d="M3 22 L7 28" stroke="#b0b0b0" stroke-width="1" stroke-dasharray="1 1"/></svg>
<svg style="position:absolute;left:14px;top:605px;" width="40" height="34" viewBox="0 0 40 34"><path d="M13 3 V31" stroke="#808080" stroke-width="1" stroke-dasharray="3 1.5"/><path d="M12 6 C6 7 7 13 9 15 C5 19 4 23 4 28 H13" fill="none" stroke="#888" stroke-width="1"/><path d="M16 14 C20 15 20 21 17 23" fill="none" stroke="#ccc" stroke-width="1"/></svg>
<svg style="position:absolute;left:56px;top:605px;" width="40" height="34" viewBox="0 0 40 34"><path d="M3 10 L16 6 L20 16 L31.5 18 L30 31 L5 31.8 Z" fill="#f0e020"/><path d="M5 26 L31 24 L30 31 L5 31.8 Z" fill="#b8a000"/><path d="M4 31 L30 30" stroke="#8a7a00" stroke-width="1"/><path d="M22 2.5 L24.5 9 L31.5 9.5 L26 14 L28.5 20.5 L22 17 L15.5 20.5 L17.5 14 L12 9.5 L19.5 9 Z" fill="#f8f040" stroke="#2a2a3a" stroke-width="1.6"/></svg>
<div style="position:absolute;left:15px;top:670px;width:39px;height:32px;background:#e3e3e3"></div>
<svg style="position:absolute;left:15px;top:670px;" width="39" height="32" viewBox="0 0 39 32"><path d="M1.5 2 V29" stroke="#3a3a3a" stroke-width="1" stroke-dasharray="2.5 1"/><path d="M6 22 H30" stroke="#d0d0d0" stroke-width="1.5"/><rect x="13.5" y="11" width="11.5" height="11.5" fill="none" stroke="#4a4a4a" stroke-width="1.2"/><path d="M4 16.5 H12" stroke="#666" stroke-width="1.6"/><path d="M3.5 16.5 L7 13.5 V19.5 Z" fill="#666"/></svg>
<div style="position:absolute;left:56px;top:670px;width:39px;height:32px;background:#e3e3e3"></div>
<svg style="position:absolute;left:56px;top:670px;" width="39" height="32" viewBox="0 0 39 32"><path d="M27.6 2 V29" stroke="#3a3a3a" stroke-width="1" stroke-dasharray="2.5 1"/><path d="M4 22 H27" stroke="#d0d0d0" stroke-width="1.5"/><rect x="4.2" y="11" width="11.5" height="11.5" fill="none" stroke="#4a4a4a" stroke-width="1.2"/><path d="M17.5 16.5 H25" stroke="#666" stroke-width="1.6"/><path d="M26 16.5 L22.5 13.5 V19.5 Z" fill="#666"/></svg>
<div style="position:absolute;left:98px;top:670px;width:39px;height:32px;background:#e3e3e3"></div>
<svg style="position:absolute;left:98px;top:670px;" width="39" height="32" viewBox="0 0 39 32"><path d="M3.4 3.7 H29.5" stroke="#3a3a3a" stroke-width="1" stroke-dasharray="2.5 1"/><path d="M8 25 H31" stroke="#d0d0d0" stroke-width="1.5"/><rect x="11.5" y="15.8" width="11" height="11.2" fill="none" stroke="#4a4a4a" stroke-width="1.2"/><path d="M16.8 7.5 V13.5" stroke="#666" stroke-width="1.6"/><path d="M16.8 6.5 L13.8 10 H19.8 Z" fill="#666"/></svg>
<div style="position:absolute;left:140px;top:670px;width:39px;height:32px;background:#e3e3e3"></div>
<svg style="position:absolute;left:140px;top:670px;" width="39" height="32" viewBox="0 0 39 32"><path d="M2.7 28 H27.6" stroke="#3a3a3a" stroke-width="1" stroke-dasharray="2.5 1"/><path d="M12 24 L28 22" stroke="#d0d0d0" stroke-width="2"/><rect x="9" y="4.8" width="11.2" height="11" fill="none" stroke="#4a4a4a" stroke-width="1.2"/><path d="M14.5 17.5 V23.5" stroke="#666" stroke-width="1.6"/><path d="M14.5 24.5 L11.5 21 H17.5 Z" fill="#666"/></svg>
<div style="position:absolute;left:182px;top:670px;width:39px;height:32px;background:#e3e3e3"></div>
<svg style="position:absolute;left:182px;top:670px;" width="39" height="32" viewBox="0 0 39 32"><path d="M2 2 V29 M27.7 2 V29" stroke="#3a3a3a" stroke-width="1" stroke-dasharray="2.5 1"/><path d="M6 22 L26 24" stroke="#d0d0d0" stroke-width="1.5"/><rect x="9.8" y="11" width="11" height="11" fill="none" stroke="#4a4a4a" stroke-width="1.2"/><path d="M3 16.5 L5.5 14 L8 16.5 L5.5 19 Z M22.5 16.5 L25 14 L27.5 16.5 L25 19 Z" fill="#666"/></svg>
<div style="position:absolute;left:15px;top:705px;width:39px;height:16px;background:#e3e3e3"></div>
<div style="position:absolute;left:56px;top:705px;width:39px;height:16px;background:#e3e3e3"></div>
<div style="position:absolute;left:98px;top:705px;width:34px;height:16px;background:#e3e3e3"></div>
<svg style="position:absolute;left:15px;top:705px;" width="39" height="16" viewBox="0 0 39 16"><path d="M2 3 H28" stroke="#3a3a3a" stroke-width="1" stroke-dasharray="2.5 1"/><path d="M15 5 L18 8 L15 11 L12 8Z" fill="#555"/><path d="M9.5 16 V12.5 H20.5 V16" fill="none" stroke="#4a4a4a" stroke-width="1.2"/></svg>
<svg style="position:absolute;left:56px;top:705px;" width="39" height="16" viewBox="0 0 39 16"><path d="M3 16 V3 H28 V16" fill="none" stroke="#3a3a3a" stroke-width="1" stroke-dasharray="2.5 1"/><path d="M15.5 5 L18.5 8 L15.5 11 L12.5 8Z" fill="#555"/><path d="M10 16 V12.5 H21 V16" fill="none" stroke="#4a4a4a" stroke-width="1.2"/></svg>
<div style="position:absolute;left:98px;top:705px;width:34px;height:16px;background:#f4f4f4"></div>
<svg style="position:absolute;left:98px;top:705px;" width="39" height="16" viewBox="0 0 39 16"><path d="M3 3 V16 M27 3 V16" stroke="#555" stroke-width="1" stroke-dasharray="1 1.5"/><path d="M15 4 V9" stroke="#555" stroke-width="1.4"/><path d="M15 3 L12.5 6 H17.5Z" fill="#555"/><path d="M9.5 16 V12 H20.5 V16" fill="none" stroke="#4a4a4a" stroke-width="1.2"/></svg>
<div style="position:absolute;left:133px;top:705px;width:5px;height:16px;background:#dadada"></div>
<svg style="position:absolute;left:132px;top:705px;" width="7" height="9" viewBox="0 0 7 9"><path d="M1.5 1 H5.5 M2.5 1.5 H4.5 L4.5 4.5 L6 6 H1 L2.5 4.5 Z M3.5 6 V9" stroke="#000" stroke-width="1" fill="#000"/></svg>
<svg style="position:absolute;left:140px;top:705px;" width="39" height="16" viewBox="0 0 39 16"><g font-family="Liberation Sans" font-size="6.5" fill="#000"><text x="5" y="17" transform="rotate(-40 5 17)">a</text><text x="10" y="10">a</text><text x="15" y="8">a</text><text x="22" y="9">a</text><text x="27" y="13" transform="rotate(40 27 13)">c</text></g></svg>
<div style="position:absolute;left:182px;top:705px;width:39px;height:16px;overflow:hidden"><div class="t" style="left:3.5px;top:3px;font-size:15px;line-height:15px;font-weight:bold;letter-spacing:-1.2px;color:#000">Nes</div><div class="t" style="left:13px;top:13px;font-size:9px;line-height:9px;font-weight:bold;color:#000">ne</div></div>
<div style="position:absolute;left:128px;top:721px;width:143px;height:26px;background:#dadada;background-image:radial-gradient(#eaeaea 0.9px, transparent 1.2px),radial-gradient(#c8c8c8 0.8px, transparent 1px);background-size:5px 4px,3px 3px;background-position:0 0,1px 2px"></div>
<div style="position:absolute;left:0px;top:721px;width:128px;height:26px;background:#f0f0f0"></div>
<div style="position:absolute;left:128px;top:721px;width:143px;height:1px;background:#a0a0a0"></div>
<div style="position:absolute;left:62px;top:721px;width:66px;height:26px;background:#f2f2f2;border-left:1px solid #a0a0a0;border-top:1px solid #a0a0a0;border-right:1px solid #d0d0d0;border-radius:0 0 4px 4px"></div>
<div class="t" style="left:8.5px;top:726.84px;font-size:12px;line-height:12px;font-weight:normal;font-style:normal;color:#111;">Assistant</div>
<div class="t" style="left:70px;top:726.84px;font-size:12px;line-height:12px;font-weight:normal;font-style:normal;color:#111;">Toolpaths</div>
<div style="position:absolute;left:0px;top:747px;width:276px;height:1px;background:#a0a0a0"></div>
<style>.rl{font-size:10.5px;line-height:11px;color:#000;font-family:"Liberation Sans",sans-serif;letter-spacing:0.3px;-webkit-text-stroke:0.1px #000}.rl i{font-style:normal;margin-right:1px}</style>
<div style="position:absolute;left:271px;top:43px;width:5px;height:705px;background:#f7f7f7"></div>
<div style="position:absolute;left:276px;top:43px;width:814px;height:1px;background:#a0a0a0"></div>
<div style="position:absolute;left:276px;top:44px;width:814px;height:1px;background:#fff"></div>
<div class="t" style="left:284.3px;top:50.64px;font-size:14.6px;line-height:14.6px;font-weight:bold;font-style:normal;color:#000;letter-spacing:-0.6px;-webkit-text-stroke:0.3px #000">3D</div>
<svg style="position:absolute;left:307px;top:51px;" width="18" height="14" viewBox="0 0 18 14"><circle cx="7" cy="6.5" r="6" fill="#d8ecf8" stroke="#7a9ab0" stroke-width="1.5"/><path d="M3.5 6.5 H10.5 M7 3 V10" stroke="#3a6a9a" stroke-width="1.6"/><circle cx="14" cy="11.5" r="3" fill="#c09060"/></svg>
<svg style="position:absolute;left:330px;top:51px;" width="18" height="14" viewBox="0 0 18 14"><circle cx="7" cy="6.5" r="6" fill="#d8ecf8" stroke="#7a9ab0" stroke-width="1.5"/><path d="M3.5 6.5 H10.5" stroke="#3a6a9a" stroke-width="1.6"/><circle cx="14" cy="11.5" r="3" fill="#c09060"/></svg>
<svg style="position:absolute;left:354px;top:51px;" width="18" height="14" viewBox="0 0 18 14"><circle cx="7" cy="6.5" r="6" fill="#d8ecf8" stroke="#7a9ab0" stroke-width="1.5"/><path d="M4.5 7 A3 3 0 1 0 7 3.5" stroke="#a09020" stroke-width="1.6" fill="none"/><circle cx="14" cy="11.5" r="3" fill="#c09060"/></svg>
<div style="position:absolute;left:377px;top:50px;width:1px;height:18px;background:#a8a8a8"></div>
<div style="position:absolute;left:378px;top:50px;width:1px;height:18px;background:#fff"></div>
<svg style="position:absolute;left:385px;top:51px;" width="18" height="14" viewBox="0 0 18 14"><circle cx="7" cy="6.5" r="6" fill="#d8ecf8" stroke="#7a9ab0" stroke-width="1.5"/><text x="7" y="9" font-size="6" text-anchor="middle" fill="#3a6a9a" font-family="Liberation Sans">1:1</text><circle cx="14" cy="11.5" r="3" fill="#c09060"/></svg>
<svg style="position:absolute;left:408px;top:51px;" width="18" height="14" viewBox="0 0 18 14"><circle cx="7" cy="6.5" r="6" fill="#d8ecf8" stroke="#7a9ab0" stroke-width="1.5"/><rect x="4" y="4" width="6" height="5" fill="none" stroke="#3a6a9a" stroke-width="1.4"/><circle cx="14" cy="11.5" r="3" fill="#c09060"/></svg>
<svg style="position:absolute;left:430px;top:51px;" width="18" height="16" viewBox="0 0 18 16"><path d="M2 6 C2 0 12 0 14 4 C16 6 15 8 14 9 L17 14 H9 L7 12 C3 12 2 10 2 6Z" fill="#a0a0a0"/></svg>
<div style="position:absolute;left:454px;top:50px;width:1px;height:18px;background:#a8a8a8"></div>
<div style="position:absolute;left:455px;top:50px;width:1px;height:18px;background:#fff"></div>
<div style="position:absolute;left:459px;top:48px;width:23px;height:21px;border-left:1px solid #a0a0a0;border-top:1px solid #a0a0a0;background:#f4f4f4"></div>
<div style="position:absolute;left:482px;top:48px;width:23px;height:21px;border-left:1px solid #a0a0a0;border-top:1px solid #a0a0a0;background:#f4f4f4"></div>
<svg style="position:absolute;left:465px;top:52px;" width="16" height="14" viewBox="0 0 16 14"><path d="M1 2 H6 M1 5 H6 M1 8 H6 M1 11 H6" stroke="#222" stroke-width="1" stroke-dasharray="1 1"/><path d="M14 4 H9 V1 L4 6.5 L9 12 V9 H14Z" fill="#666" stroke="#111" stroke-width="1"/></svg>
<svg style="position:absolute;left:487px;top:52px;" width="16" height="14" viewBox="0 0 16 14"><path d="M10 2 H15 M10 5 H15 M10 8 H15 M10 11 H15" stroke="#222" stroke-width="1" stroke-dasharray="1 1"/><path d="M1 4 H6 V1 L11 6.5 L6 12 V9 H1Z" fill="#666" stroke="#111" stroke-width="1"/></svg>
<svg style="position:absolute;left:508px;top:51px;" width="18" height="15" viewBox="0 0 18 15"><path d="M1 7 L9 2 V12Z" fill="#7080c0"/><circle cx="11" cy="7" r="5" fill="#a8c0e8" stroke="#7890c0" stroke-width="1"/><path d="M14 10 L17 14" stroke="#c09060" stroke-width="2"/></svg>
<div style="position:absolute;left:531px;top:50px;width:1px;height:18px;background:#a8a8a8"></div>
<div style="position:absolute;left:532px;top:50px;width:1px;height:18px;background:#fff"></div>
<div style="position:absolute;left:544px;top:58px;width:74px;height:2px;background:#808080"></div>
<svg style="position:absolute;left:617px;top:50px;" width="12" height="21" viewBox="0 0 12 21"><path d="M0.5 0.5 H9 V15 L5 19 H0.5Z" fill="#f0f0f0"/><path d="M9.5 0.5 V15.5 L5.5 19.5" stroke="#606060" stroke-width="1.2" fill="none"/><path d="M0.5 0.5 H9" stroke="#fff"/></svg>
<svg style="position:absolute;left:277px;top:74px;" width="793" height="21" viewBox="0 0 793 21"><rect x="0" y="0" width="793" height="1" fill="#a0a0a0"/><rect x="0" y="1" width="793" height="1" fill="#fff"/><rect x="0" y="20" width="793" height="1" fill="#a0a0a0"/><rect x="0" y="0" width="1" height="21" fill="#a0a0a0"/><rect x="20" y="0" width="1" height="21" fill="#a0a0a0"/><rect x="22" y="18" width="1" height="2" fill="#000"/><rect x="27" y="18" width="1" height="2" fill="#000"/><rect x="33" y="18" width="1" height="2" fill="#000"/><rect x="38" y="14" width="1" height="6" fill="#000"/><rect x="43" y="18" width="1" height="2" fill="#000"/><rect x="48" y="18" width="1" height="2" fill="#000"/><rect x="54" y="18" width="1" height="2" fill="#000"/><rect x="59" y="18" width="1" height="2" fill="#000"/><rect x="64" y="16" width="1" height="4" fill="#000"/><rect x="69" y="18" width="1" height="2" fill="#000"/><rect x="75" y="18" width="1" height="2" fill="#000"/><rect x="80" y="18" width="1" height="2" fill="#000"/><rect x="85" y="18" width="1" height="2" fill="#000"/><rect x="90" y="14" width="1" height="6" fill="#000"/><rect x="96" y="18" width="1" height="2" fill="#000"/><rect x="101" y="18" width="1" height="2" fill="#000"/><rect x="106" y="18" width="1" height="2" fill="#000"/><rect x="111" y="18" width="1" height="2" fill="#000"/><rect x="117" y="16" width="1" height="4" fill="#000"/><rect x="122" y="18" width="1" height="2" fill="#000"/><rect x="127" y="18" width="1" height="2" fill="#000"/><rect x="132" y="18" width="1" height="2" fill="#000"/><rect x="138" y="18" width="1" height="2" fill="#000"/><rect x="143" y="14" width="1" height="6" fill="#000"/><rect x="148" y="18" width="1" height="2" fill="#000"/><rect x="153" y="18" width="1" height="2" fill="#000"/><rect x="159" y="18" width="1" height="2" fill="#000"/><rect x="164" y="18" width="1" height="2" fill="#000"/><rect x="169" y="16" width="1" height="4" fill="#000"/><rect x="174" y="18" width="1" height="2" fill="#000"/><rect x="180" y="18" width="1" height="2" fill="#000"/><rect x="185" y="18" width="1" height="2" fill="#000"/><rect x="190" y="18" width="1" height="2" fill="#000"/><rect x="195" y="14" width="1" height="6" fill="#000"/><rect x="201" y="18" width="1" height="2" fill="#000"/><rect x="206" y="18" width="1" height="2" fill="#000"/><rect x="211" y="18" width="1" height="2" fill="#000"/><rect x="216" y="18" width="1" height="2" fill="#000"/><rect x="222" y="16" width="1" height="4" fill="#000"/><rect x="227" y="18" width="1" height="2" fill="#000"/><rect x="232" y="18" width="1" height="2" fill="#000"/><rect x="237" y="18" width="1" height="2" fill="#000"/><rect x="243" y="18" width="1" height="2" fill="#000"/><rect x="248" y="14" width="1" height="6" fill="#000"/><rect x="253" y="18" width="1" height="2" fill="#000"/><rect x="258" y="18" width="1" height="2" fill="#000"/><rect x="264" y="18" width="1" height="2" fill="#000"/><rect x="269" y="18" width="1" height="2" fill="#000"/><rect x="274" y="16" width="1" height="4" fill="#000"/><rect x="279" y="18" width="1" height="2" fill="#000"/><rect x="285" y="18" width="1" height="2" fill="#000"/><rect x="290" y="18" width="1" height="2" fill="#000"/><rect x="295" y="18" width="1" height="2" fill="#000"/><rect x="300" y="14" width="1" height="6" fill="#000"/><rect x="306" y="18" width="1" height="2" fill="#000"/><rect x="311" y="18" width="1" height="2" fill="#000"/><rect x="316" y="18" width="1" height="2" fill="#000"/><rect x="321" y="18" width="1" height="2" fill="#000"/><rect x="327" y="16" width="1" height="4" fill="#000"/><rect x="332" y="18" width="1" height="2" fill="#000"/><rect x="337" y="18" width="1" height="2" fill="#000"/><rect x="342" y="18" width="1" height="2" fill="#000"/><rect x="348" y="18" width="1" height="2" fill="#000"/><rect x="353" y="14" width="1" height="6" fill="#000"/><rect x="358" y="18" width="1" height="2" fill="#000"/><rect x="363" y="18" width="1" height="2" fill="#000"/><rect x="369" y="18" width="1" height="2" fill="#000"/><rect x="374" y="18" width="1" height="2" fill="#000"/><rect x="379" y="16" width="1" height="4" fill="#000"/><rect x="384" y="18" width="1" height="2" fill="#000"/><rect x="390" y="18" width="1" height="2" fill="#000"/><rect x="395" y="18" width="1" height="2" fill="#000"/><rect x="400" y="18" width="1" height="2" fill="#000"/><rect x="405" y="14" width="1" height="6" fill="#000"/><rect x="411" y="18" width="1" height="2" fill="#000"/><rect x="416" y="18" width="1" height="2" fill="#000"/><rect x="421" y="18" width="1" height="2" fill="#000"/><rect x="426" y="18" width="1" height="2" fill="#000"/><rect x="432" y="16" width="1" height="4" fill="#000"/><rect x="437" y="18" width="1" height="2" fill="#000"/><rect x="442" y="18" width="1" height="2" fill="#000"/><rect x="447" y="18" width="1" height="2" fill="#000"/><rect x="453" y="18" width="1" height="2" fill="#000"/><rect x="458" y="14" width="1" height="6" fill="#000"/><rect x="463" y="18" width="1" height="2" fill="#000"/><rect x="468" y="18" width="1" height="2" fill="#000"/><rect x="474" y="18" width="1" height="2" fill="#000"/><rect x="479" y="18" width="1" height="2" fill="#000"/><rect x="484" y="16" width="1" height="4" fill="#000"/><rect x="489" y="18" width="1" height="2" fill="#000"/><rect x="495" y="18" width="1" height="2" fill="#000"/><rect x="500" y="18" width="1" height="2" fill="#000"/><rect x="505" y="18" width="1" height="2" fill="#000"/><rect x="510" y="14" width="1" height="6" fill="#000"/><rect x="516" y="18" width="1" height="2" fill="#000"/><rect x="521" y="18" width="1" height="2" fill="#000"/><rect x="526" y="18" width="1" height="2" fill="#000"/><rect x="531" y="18" width="1" height="2" fill="#000"/><rect x="537" y="16" width="1" height="4" fill="#000"/><rect x="542" y="18" width="1" height="2" fill="#000"/><rect x="547" y="18" width="1" height="2" fill="#000"/><rect x="552" y="18" width="1" height="2" fill="#000"/><rect x="558" y="18" width="1" height="2" fill="#000"/><rect x="563" y="14" width="1" height="6" fill="#000"/><rect x="568" y="18" width="1" height="2" fill="#000"/><rect x="573" y="18" width="1" height="2" fill="#000"/><rect x="579" y="18" width="1" height="2" fill="#000"/><rect x="584" y="18" width="1" height="2" fill="#000"/><rect x="589" y="16" width="1" height="4" fill="#000"/><rect x="594" y="18" width="1" height="2" fill="#000"/><rect x="600" y="18" width="1" height="2" fill="#000"/><rect x="605" y="18" width="1" height="2" fill="#000"/><rect x="610" y="18" width="1" height="2" fill="#000"/><rect x="615" y="14" width="1" height="6" fill="#000"/><rect x="621" y="18" width="1" height="2" fill="#000"/><rect x="626" y="18" width="1" height="2" fill="#000"/><rect x="631" y="18" width="1" height="2" fill="#000"/><rect x="636" y="18" width="1" height="2" fill="#000"/><rect x="642" y="16" width="1" height="4" fill="#000"/><rect x="647" y="18" width="1" height="2" fill="#000"/><rect x="652" y="18" width="1" height="2" fill="#000"/><rect x="657" y="18" width="1" height="2" fill="#000"/><rect x="663" y="18" width="1" height="2" fill="#000"/><rect x="668" y="14" width="1" height="6" fill="#000"/><rect x="673" y="18" width="1" height="2" fill="#000"/><rect x="678" y="18" width="1" height="2" fill="#000"/><rect x="684" y="18" width="1" height="2" fill="#000"/><rect x="689" y="18" width="1" height="2" fill="#000"/><rect x="694" y="16" width="1" height="4" fill="#000"/><rect x="699" y="18" width="1" height="2" fill="#000"/><rect x="705" y="18" width="1" height="2" fill="#000"/><rect x="710" y="18" width="1" height="2" fill="#000"/><rect x="715" y="18" width="1" height="2" fill="#000"/><rect x="720" y="14" width="1" height="6" fill="#000"/><rect x="726" y="18" width="1" height="2" fill="#000"/><rect x="731" y="18" width="1" height="2" fill="#000"/><rect x="736" y="18" width="1" height="2" fill="#000"/><rect x="741" y="18" width="1" height="2" fill="#000"/><rect x="747" y="16" width="1" height="4" fill="#000"/><rect x="752" y="18" width="1" height="2" fill="#000"/><rect x="757" y="18" width="1" height="2" fill="#000"/><rect x="762" y="18" width="1" height="2" fill="#000"/><rect x="768" y="18" width="1" height="2" fill="#000"/><rect x="773" y="14" width="1" height="6" fill="#000"/><rect x="778" y="18" width="1" height="2" fill="#000"/><rect x="783" y="18" width="1" height="2" fill="#000"/><rect x="789" y="18" width="1" height="2" fill="#000"/></svg>
<div class="t rl" style="left:275.7px;top:77px;width:80px;text-align:center"><i>&#8211;</i>1400</div>
<div class="t rl" style="left:328.2px;top:77px;width:80px;text-align:center"><i>&#8211;</i>1200</div>
<div class="t rl" style="left:380.7px;top:77px;width:80px;text-align:center"><i>&#8211;</i>1000</div>
<div class="t rl" style="left:433.2px;top:77px;width:80px;text-align:center"><i>&#8211;</i>800</div>
<div class="t rl" style="left:485.7px;top:77px;width:80px;text-align:center"><i>&#8211;</i>600</div>
<div class="t rl" style="left:538.2px;top:77px;width:80px;text-align:center"><i>&#8211;</i>400</div>
<div class="t rl" style="left:590.7px;top:77px;width:80px;text-align:center"><i>&#8211;</i>200</div>
<div class="t rl" style="left:641.7px;top:77px;width:80px;text-align:center">0</div>
<div class="t rl" style="left:694.2px;top:77px;width:80px;text-align:center">200</div>
<div class="t rl" style="left:746.7px;top:77px;width:80px;text-align:center">400</div>
<div class="t rl" style="left:799.2px;top:77px;width:80px;text-align:center">600</div>
<div class="t rl" style="left:851.7px;top:77px;width:80px;text-align:center">800</div>
<div class="t rl" style="left:904.2px;top:77px;width:80px;text-align:center">1000</div>
<div class="t rl" style="left:956.7px;top:77px;width:80px;text-align:center">1200</div>
<div class="t rl" style="left:1027px;top:77px;font-size:9.6px;letter-spacing:-0.3px">millimetres</div>
<svg style="position:absolute;left:277px;top:94px;" width="21" height="592" viewBox="0 0 21 592"><rect x="0" y="0" width="1" height="592" fill="#a0a0a0"/><rect x="1" y="0" width="1" height="592" fill="#fff"/><rect x="20" y="0" width="1" height="592" fill="#a0a0a0"/><rect x="18" y="589" width="2" height="1" fill="#000"/><rect x="16" y="583" width="4" height="1" fill="#000"/><rect x="18" y="578" width="2" height="1" fill="#000"/><rect x="18" y="573" width="2" height="1" fill="#000"/><rect x="18" y="568" width="2" height="1" fill="#000"/><rect x="18" y="562" width="2" height="1" fill="#000"/><rect x="14" y="557" width="6" height="1" fill="#000"/><rect x="18" y="552" width="2" height="1" fill="#000"/><rect x="18" y="547" width="2" height="1" fill="#000"/><rect x="18" y="541" width="2" height="1" fill="#000"/><rect x="18" y="536" width="2" height="1" fill="#000"/><rect x="16" y="531" width="4" height="1" fill="#000"/><rect x="18" y="526" width="2" height="1" fill="#000"/><rect x="18" y="520" width="2" height="1" fill="#000"/><rect x="18" y="515" width="2" height="1" fill="#000"/><rect x="18" y="510" width="2" height="1" fill="#000"/><rect x="14" y="505" width="6" height="1" fill="#000"/><rect x="18" y="499" width="2" height="1" fill="#000"/><rect x="18" y="494" width="2" height="1" fill="#000"/><rect x="18" y="489" width="2" height="1" fill="#000"/><rect x="18" y="484" width="2" height="1" fill="#000"/><rect x="16" y="478" width="4" height="1" fill="#000"/><rect x="18" y="473" width="2" height="1" fill="#000"/><rect x="18" y="468" width="2" height="1" fill="#000"/><rect x="18" y="463" width="2" height="1" fill="#000"/><rect x="18" y="457" width="2" height="1" fill="#000"/><rect x="14" y="452" width="6" height="1" fill="#000"/><rect x="18" y="447" width="2" height="1" fill="#000"/><rect x="18" y="442" width="2" height="1" fill="#000"/><rect x="18" y="436" width="2" height="1" fill="#000"/><rect x="18" y="431" width="2" height="1" fill="#000"/><rect x="16" y="426" width="4" height="1" fill="#000"/><rect x="18" y="421" width="2" height="1" fill="#000"/><rect x="18" y="415" width="2" height="1" fill="#000"/><rect x="18" y="410" width="2" height="1" fill="#000"/><rect x="18" y="405" width="2" height="1" fill="#000"/><rect x="14" y="400" width="6" height="1" fill="#000"/><rect x="18" y="394" width="2" height="1" fill="#000"/><rect x="18" y="389" width="2" height="1" fill="#000"/><rect x="18" y="384" width="2" height="1" fill="#000"/><rect x="18" y="379" width="2" height="1" fill="#000"/><rect x="16" y="373" width="4" height="1" fill="#000"/><rect x="18" y="368" width="2" height="1" fill="#000"/><rect x="18" y="363" width="2" height="1" fill="#000"/><rect x="18" y="358" width="2" height="1" fill="#000"/><rect x="18" y="352" width="2" height="1" fill="#000"/><rect x="14" y="347" width="6" height="1" fill="#000"/><rect x="18" y="342" width="2" height="1" fill="#000"/><rect x="18" y="337" width="2" height="1" fill="#000"/><rect x="18" y="331" width="2" height="1" fill="#000"/><rect x="18" y="326" width="2" height="1" fill="#000"/><rect x="16" y="321" width="4" height="1" fill="#000"/><rect x="18" y="316" width="2" height="1" fill="#000"/><rect x="18" y="310" width="2" height="1" fill="#000"/><rect x="18" y="305" width="2" height="1" fill="#000"/><rect x="18" y="300" width="2" height="1" fill="#000"/><rect x="14" y="294" width="6" height="1" fill="#000"/><rect x="18" y="289" width="2" height="1" fill="#000"/><rect x="18" y="284" width="2" height="1" fill="#000"/><rect x="18" y="279" width="2" height="1" fill="#000"/><rect x="18" y="273" width="2" height="1" fill="#000"/><rect x="16" y="268" width="4" height="1" fill="#000"/><rect x="18" y="263" width="2" height="1" fill="#000"/><rect x="18" y="258" width="2" height="1" fill="#000"/><rect x="18" y="252" width="2" height="1" fill="#000"/><rect x="18" y="247" width="2" height="1" fill="#000"/><rect x="14" y="242" width="6" height="1" fill="#000"/><rect x="18" y="237" width="2" height="1" fill="#000"/><rect x="18" y="231" width="2" height="1" fill="#000"/><rect x="18" y="226" width="2" height="1" fill="#000"/><rect x="18" y="221" width="2" height="1" fill="#000"/><rect x="16" y="216" width="4" height="1" fill="#000"/><rect x="18" y="210" width="2" height="1" fill="#000"/><rect x="18" y="205" width="2" height="1" fill="#000"/><rect x="18" y="200" width="2" height="1" fill="#000"/><rect x="18" y="195" width="2" height="1" fill="#000"/><rect x="14" y="189" width="6" height="1" fill="#000"/><rect x="18" y="184" width="2" height="1" fill="#000"/><rect x="18" y="179" width="2" height="1" fill="#000"/><rect x="18" y="174" width="2" height="1" fill="#000"/><rect x="18" y="168" width="2" height="1" fill="#000"/><rect x="16" y="163" width="4" height="1" fill="#000"/><rect x="18" y="158" width="2" height="1" fill="#000"/><rect x="18" y="153" width="2" height="1" fill="#000"/><rect x="18" y="147" width="2" height="1" fill="#000"/><rect x="18" y="142" width="2" height="1" fill="#000"/><rect x="14" y="137" width="6" height="1" fill="#000"/><rect x="18" y="132" width="2" height="1" fill="#000"/><rect x="18" y="126" width="2" height="1" fill="#000"/><rect x="18" y="121" width="2" height="1" fill="#000"/><rect x="18" y="116" width="2" height="1" fill="#000"/><rect x="16" y="111" width="4" height="1" fill="#000"/><rect x="18" y="105" width="2" height="1" fill="#000"/><rect x="18" y="100" width="2" height="1" fill="#000"/><rect x="18" y="95" width="2" height="1" fill="#000"/><rect x="18" y="90" width="2" height="1" fill="#000"/><rect x="14" y="84" width="6" height="1" fill="#000"/><rect x="18" y="79" width="2" height="1" fill="#000"/><rect x="18" y="74" width="2" height="1" fill="#000"/><rect x="18" y="69" width="2" height="1" fill="#000"/><rect x="18" y="63" width="2" height="1" fill="#000"/><rect x="16" y="58" width="4" height="1" fill="#000"/><rect x="18" y="53" width="2" height="1" fill="#000"/><rect x="18" y="48" width="2" height="1" fill="#000"/><rect x="18" y="42" width="2" height="1" fill="#000"/><rect x="18" y="37" width="2" height="1" fill="#000"/><rect x="14" y="32" width="6" height="1" fill="#000"/><rect x="18" y="27" width="2" height="1" fill="#000"/><rect x="18" y="21" width="2" height="1" fill="#000"/><rect x="18" y="16" width="2" height="1" fill="#000"/><rect x="18" y="11" width="2" height="1" fill="#000"/><rect x="16" y="6" width="4" height="1" fill="#000"/></svg>
<div class="t rl" style="left:245.5px;top:645.2px;width:80px;text-align:center;transform:rotate(-90deg)"><i>&#8211;</i>1000</div>
<div class="t rl" style="left:245.5px;top:592.7px;width:80px;text-align:center;transform:rotate(-90deg)"><i>&#8211;</i>800</div>
<div class="t rl" style="left:245.5px;top:540.1px;width:80px;text-align:center;transform:rotate(-90deg)"><i>&#8211;</i>600</div>
<div class="t rl" style="left:245.5px;top:487.6px;width:80px;text-align:center;transform:rotate(-90deg)"><i>&#8211;</i>400</div>
<div class="t rl" style="left:245.5px;top:435.0px;width:80px;text-align:center;transform:rotate(-90deg)"><i>&#8211;</i>200</div>
<div class="t rl" style="left:245.5px;top:382.5px;width:80px;text-align:center;transform:rotate(-90deg)">0</div>
<div class="t rl" style="left:245.5px;top:330.0px;width:80px;text-align:center;transform:rotate(-90deg)">200</div>
<div class="t rl" style="left:245.5px;top:277.4px;width:80px;text-align:center;transform:rotate(-90deg)">400</div>
<div class="t rl" style="left:245.5px;top:224.9px;width:80px;text-align:center;transform:rotate(-90deg)">600</div>
<div class="t rl" style="left:245.5px;top:172.3px;width:80px;text-align:center;transform:rotate(-90deg)">800</div>
<div class="t rl" style="left:245.5px;top:119.8px;width:80px;text-align:center;transform:rotate(-90deg)">1000</div>
<div style="position:absolute;left:279px;top:596px;width:18px;height:1px;background:#000"></div>
<div style="position:absolute;left:1068px;top:76px;width:1px;height:18px;background:#000"></div>
<svg style="position:absolute;left:279px;top:76px;" width="18" height="18" viewBox="0 0 18 18"><path d="M2 9.5 H16" stroke="#777" stroke-width="1" stroke-dasharray="1.2 1.2"/><path d="M8.5 5 V14 M12.5 5 V14" stroke="#777" stroke-width="1" stroke-dasharray="1.5 1.5"/></svg>
<div style="position:absolute;left:1070px;top:74px;width:18px;height:21px;background:#f4f4f4;border:1px solid #a0a0a0;border-top-color:#fff;border-left-color:#fff;box-shadow:inset -1px -1px 0 #888"></div>
<svg style="position:absolute;left:1073px;top:79px;" width="12" height="12" viewBox="0 0 12 12"><path d="M2 1.5 H4 M7 1.5 H9" stroke="#000" stroke-width="1"/><path d="M1 4 H10 L5.5 9Z" fill="#000"/></svg>
<div style="position:absolute;left:298px;top:95px;width:773px;height:590px;background:#f0f0f0"></div>
<div style="position:absolute;left:1071px;top:94px;width:17px;height:592px;background:#f0f0f0"></div>
<div style="position:absolute;left:1072px;top:112px;width:15px;height:556px;background:#cdcdcd"></div>
<svg style="position:absolute;left:1073px;top:99px;" width="12" height="10" viewBox="0 0 12 10"><path d="M1.5 7.5 L6 3 L10.5 7.5" stroke="#555" stroke-width="2.5" fill="none"/></svg>
<svg style="position:absolute;left:1073px;top:672px;" width="12" height="10" viewBox="0 0 12 10"><path d="M1.5 2.5 L6 7 L10.5 2.5" stroke="#555" stroke-width="2.5" fill="none"/></svg>
<div style="position:absolute;left:277px;top:685px;width:21px;height:17px;background:#f0f0f0;border:1px solid #a0a0a0;border-top-color:#fff;border-left-color:#a0a0a0;box-shadow:inset -1px -1px 0 #888"></div>
<svg style="position:absolute;left:282px;top:688px;" width="14" height="12" viewBox="0 0 14 12"><path d="M3.5 1 V3 M3.5 5 V7 M3.5 9 V11" stroke="#000" stroke-width="1.3"/><path d="M6 1.5 L11 6 L6 10.5Z" fill="#000"/></svg>
<div style="position:absolute;left:298px;top:686px;width:773px;height:15px;background:#f0f0f0"></div>
<div style="position:absolute;left:315px;top:686px;width:739px;height:15px;background:#cdcdcd"></div>
<svg style="position:absolute;left:301px;top:688px;" width="10" height="12" viewBox="0 0 10 12"><path d="M7.5 1.5 L3 6 L7.5 10.5" stroke="#555" stroke-width="2.5" fill="none"/></svg>
<svg style="position:absolute;left:1057px;top:688px;" width="10" height="12" viewBox="0 0 10 12"><path d="M2.5 1.5 L7 6 L2.5 10.5" stroke="#555" stroke-width="2.5" fill="none"/></svg>
<div style="position:absolute;left:277px;top:706px;width:812px;height:42px;border-top:1px solid #a0a0a0;border-left:1px solid #a0a0a0;background:#f0f0f0"></div>
<div style="position:absolute;left:277px;top:747px;width:812px;height:1px;background:#fafafa"></div>
<div style="position:absolute;left:283px;top:711px;width:25px;height:20px;background:#fff;border:1px solid #000;box-shadow:1px 1px 0 #888"></div>
<div style="position:absolute;left:298px;top:723px;width:25px;height:20px;background:#000"></div>
<div style="position:absolute;left:283px;top:711px;width:25px;height:20px;background:#fff;border:1px solid #000"></div>
<svg style="position:absolute;left:310px;top:710px;" width="14" height="10" viewBox="0 0 14 10"><ellipse cx="5" cy="4" rx="3.5" ry="2.6" fill="none" stroke="#000" stroke-width="1.2"/><ellipse cx="8" cy="6" rx="3.5" ry="2.6" fill="#fff" stroke="#000" stroke-width="1.2"/></svg>
<div style="position:absolute;left:334px;top:713px;width:30px;height:30px;background:#888"></div>
<div style="position:absolute;left:333px;top:712px;width:30px;height:30px;background:#ffffff;border:1px solid #000"></div>
<div style="position:absolute;left:369px;top:713px;width:30px;height:30px;background:#888"></div>
<div style="position:absolute;left:368px;top:712px;width:30px;height:30px;background:#000000;border:1px solid #000"></div>
<div style="position:absolute;left:404px;top:713px;width:30px;height:30px;background:#888"></div>
<div style="position:absolute;left:403px;top:712px;width:30px;height:30px;background:#00ffff;border:1px solid #000"></div>
<div style="position:absolute;left:439px;top:713px;width:30px;height:30px;background:#888"></div>
<div style="position:absolute;left:438px;top:712px;width:30px;height:30px;background:#3040e0;border:1px solid #000"></div>
<div style="position:absolute;left:474px;top:713px;width:30px;height:30px;background:#888"></div>
<div style="position:absolute;left:473px;top:712px;width:30px;height:30px;background:#50b850;border:1px solid #000"></div>
<div style="position:absolute;left:509px;top:713px;width:30px;height:30px;background:#888"></div>
<div style="position:absolute;left:508px;top:712px;width:30px;height:30px;background:#e01020;border:1px solid #000"></div>
<div style="position:absolute;left:544px;top:713px;width:30px;height:30px;background:#888"></div>
<div style="position:absolute;left:543px;top:712px;width:30px;height:30px;background:#a030e0;border:1px solid #000"></div>
<div style="position:absolute;left:579px;top:713px;width:30px;height:30px;background:#888"></div>
<div style="position:absolute;left:578px;top:712px;width:30px;height:30px;background:#ffff80;border:1px solid #000"></div>
<div style="position:absolute;left:614px;top:713px;width:30px;height:30px;background:#888"></div>
<div style="position:absolute;left:613px;top:712px;width:30px;height:30px;background:#a89838;border:1px solid #000"></div>
<div style="position:absolute;left:649px;top:713px;width:30px;height:30px;background:#888"></div>
<div style="position:absolute;left:648px;top:712px;width:30px;height:30px;background:#ffc800;border:1px solid #000"></div>
<div style="position:absolute;left:684px;top:713px;width:30px;height:30px;background:#888"></div>
<div style="position:absolute;left:683px;top:712px;width:30px;height:30px;background:#000000;border:1px solid #000"></div>
<div style="position:absolute;left:719px;top:713px;width:30px;height:30px;background:#888"></div>
<div style="position:absolute;left:718px;top:712px;width:30px;height:30px;background:#000000;border:1px solid #000"></div>
<div style="position:absolute;left:754px;top:713px;width:30px;height:30px;background:#888"></div>
<div style="position:absolute;left:753px;top:712px;width:30px;height:30px;background:#000000;border:1px solid #000"></div>
<div style="position:absolute;left:789px;top:713px;width:30px;height:30px;background:#888"></div>
<div style="position:absolute;left:788px;top:712px;width:30px;height:30px;background:#000000;border:1px solid #000"></div>
<div style="position:absolute;left:824px;top:713px;width:30px;height:30px;background:#888"></div>
<div style="position:absolute;left:823px;top:712px;width:30px;height:30px;background:#000000;border:1px solid #000"></div>
<div style="position:absolute;left:859px;top:713px;width:30px;height:30px;background:#888"></div>
<div style="position:absolute;left:858px;top:712px;width:30px;height:30px;background:#000000;border:1px solid #000"></div>
<div style="position:absolute;left:894px;top:713px;width:30px;height:30px;background:#888"></div>
<div style="position:absolute;left:893px;top:712px;width:30px;height:30px;background:#000000;border:1px solid #000"></div>
<div style="position:absolute;left:929px;top:713px;width:30px;height:30px;background:#888"></div>
<div style="position:absolute;left:928px;top:712px;width:30px;height:30px;background:#000000;border:1px solid #000"></div>
<div style="position:absolute;left:964px;top:713px;width:30px;height:30px;background:#888"></div>
<div style="position:absolute;left:963px;top:712px;width:30px;height:30px;background:#000000;border:1px solid #000"></div>
<div style="position:absolute;left:999px;top:713px;width:30px;height:30px;background:#888"></div>
<div style="position:absolute;left:998px;top:712px;width:30px;height:30px;background:#000000;border:1px solid #000"></div>
<div style="position:absolute;left:1034px;top:713px;width:30px;height:30px;background:#888"></div>
<div style="position:absolute;left:1033px;top:712px;width:30px;height:30px;background:#000000;border:1px solid #000"></div>
<svg style="position:absolute;left:1073px;top:711px;" width="12" height="10" viewBox="0 0 12 10"><path d="M1.5 7.5 L6 3 L10.5 7.5" stroke="#555" stroke-width="2.5" fill="none"/></svg>
<svg style="position:absolute;left:1073px;top:734px;" width="12" height="10" viewBox="0 0 12 10"><path d="M1.5 2.5 L6 7 L10.5 2.5" stroke="#555" stroke-width="2.5" fill="none"/></svg>
<div style="position:absolute;left:1089px;top:43px;width:1px;height:705px;background:#f8f8f8"></div>
<svg style="position:absolute;left:520px;top:110px;shape-rendering:auto" width="340" height="560" viewBox="0 0 340 560"><defs><radialGradient id="knobg"><stop offset="0" stop-color="#d8d8d8"/><stop offset=".6" stop-color="#b0b0b0" stop-opacity=".8"/><stop offset="1" stop-color="#909090" stop-opacity="0"/></radialGradient><radialGradient id="petal" cx=".5" cy=".7" r=".6"><stop offset="0" stop-color="#9a9a9a"/><stop offset="1" stop-color="#404040"/></radialGradient></defs><rect x="12.5" y="11.5" width="301" height="535" fill="#ffff80" stroke="#000" stroke-width="1"/><rect x="74" y="55" width="178" height="447" fill="#111"/><path d="M98.5,380.5 V147.0 H124.44 Q127.44,147.00 128.59,144.00 A38.00 38.00 0 0 1 198.41,144.00 Q199.56,147.00 202.56,147.00 H228.5 V380.5 Z" fill="none" stroke="#000" stroke-width="1"/><path d="M99,380 V147.5 H124.81 Q127.81,147.50 128.92,144.50 A37.50 37.50 0 0 1 198.08,144.50 Q199.19,147.50 202.19,147.50 H228 V380 Z" fill="#cbcbcb"/><path d="M99.5,379.5 V148.0 H125.17 Q128.17,148.00 129.25,145.00 A37.00 37.00 0 0 1 197.75,145.00 Q198.83,148.00 201.83,148.00 H227.5 V379.5 Z" fill="none" stroke="#fff" stroke-width="1.05"/><path d="M100.5,378.5 V149.0 H125.92 Q128.92,149.00 129.93,146.00 A36.00 36.00 0 0 1 197.07,146.00 Q198.08,149.00 201.08,149.00 H226.5 V378.5 Z" fill="none" stroke="#d4d4d4" stroke-width="1.05"/><path d="M101.5,377.5 V150.0 H126.68 Q129.68,150.00 130.62,147.00 A35.00 35.00 0 0 1 196.38,147.00 Q197.32,150.00 200.32,150.00 H225.5 V377.5 Z" fill="none" stroke="#cccccc" stroke-width="1.05"/><path d="M102.5,376.5 V151.0 H127.45 Q130.45,151.00 131.33,148.00 A34.00 34.00 0 0 1 195.67,148.00 Q196.55,151.00 199.55,151.00 H224.5 V376.5 Z" fill="none" stroke="#d8d8d8" stroke-width="1.05"/><path d="M103.5,375.5 V152.0 H128.25 Q131.25,152.00 132.05,149.00 A33.00 33.00 0 0 1 194.95,149.00 Q195.75,152.00 198.75,152.00 H223.5 V375.5 Z" fill="none" stroke="#c0c0c0" stroke-width="1.05"/><path d="M104.5,374.5 V153.0 H129.07 Q132.07,153.00 132.79,150.00 A32.00 32.00 0 0 1 194.21,150.00 Q194.93,153.00 197.93,153.00 H222.5 V374.5 Z" fill="none" stroke="#909090" stroke-width="1.05"/><path d="M105.5,373.5 V154.0 H129.91 Q132.91,154.00 133.55,151.00 A31.00 31.00 0 0 1 193.45,151.00 Q194.09,154.00 197.09,154.00 H221.5 V373.5 Z" fill="none" stroke="#5a5a5a" stroke-width="1.05"/><path d="M106.5,372.5 V155.0 H130.77 Q133.77,155.00 134.33,152.00 A30.00 30.00 0 0 1 192.67,152.00 Q193.23,155.00 196.23,155.00 H220.5 V372.5 Z" fill="none" stroke="#464646" stroke-width="1.05"/><path d="M107.5,371.5 V156.0 H131.66 Q134.66,156.00 135.13,153.00 A29.00 29.00 0 0 1 191.87,153.00 Q192.34,156.00 195.34,156.00 H219.5 V371.5 Z" fill="none" stroke="#b8b8b8" stroke-width="1.05"/><path d="M108.5,370.5 V157.0 H132.57 Q135.57,157.00 135.95,154.00 A28.00 28.00 0 0 1 191.05,154.00 Q191.43,157.00 194.43,157.00 H218.5 V370.5 Z" fill="none" stroke="#1c1c1c" stroke-width="1.05"/><path d="M109.5,369.5 V158.0 H133.52 Q136.52,158.00 136.80,155.00 A27.00 27.00 0 0 1 190.20,155.00 Q190.48,158.00 193.48,158.00 H217.5 V369.5 Z" fill="none" stroke="#949494" stroke-width="1.05"/><path d="M98.5,81.5 H156.5 V107.57 A51.90 51.90 0 0 0 117.75,134.5 H98.5 Z" fill="none" stroke="#000" stroke-width="1"/><path d="M99,82 H156 V107.14 A52.40 52.40 0 0 0 117.45,134 H99 Z" fill="#f6f6f6"/><path d="M99.5,82.5 H155.5 V106.71 A52.90 52.90 0 0 0 117.15,133.5 H99.5 Z" fill="none" stroke="#fff" stroke-width="1.05"/><path d="M100.5,83.5 H154.5 V105.86 A53.90 53.90 0 0 0 116.56,132.5 H100.5 Z" fill="none" stroke="#d4d4d4" stroke-width="1.05"/><path d="M101.5,84.5 H153.5 V105.02 A54.90 54.90 0 0 0 115.98,131.5 H101.5 Z" fill="none" stroke="#cccccc" stroke-width="1.05"/><path d="M102.5,85.5 H152.5 V104.19 A55.90 55.90 0 0 0 115.41,130.5 H102.5 Z" fill="none" stroke="#d8d8d8" stroke-width="1.05"/><path d="M103.5,86.5 H151.5 V103.38 A56.90 56.90 0 0 0 114.84,129.5 H103.5 Z" fill="none" stroke="#c0c0c0" stroke-width="1.05"/><path d="M104.5,87.5 H150.5 V102.58 A57.90 57.90 0 0 0 114.28,128.5 H104.5 Z" fill="none" stroke="#909090" stroke-width="1.05"/><path d="M105.5,88.5 H149.5 V101.79 A58.90 58.90 0 0 0 113.73,127.5 H105.5 Z" fill="none" stroke="#5a5a5a" stroke-width="1.05"/><path d="M106.5,89.5 H148.5 V101.01 A59.90 59.90 0 0 0 113.18,126.5 H106.5 Z" fill="none" stroke="#464646" stroke-width="1.05"/><path d="M107.5,90.5 H147.5 V100.24 A60.90 60.90 0 0 0 112.64,125.5 H107.5 Z" fill="none" stroke="#b8b8b8" stroke-width="1.05"/><path d="M108.5,91.5 H146.5 V99.48 A61.90 61.90 0 0 0 112.11,124.5 H108.5 Z" fill="none" stroke="#1c1c1c" stroke-width="1.05"/><path d="M109.5,92.5 H145.5 V98.73 A62.90 62.90 0 0 0 111.58,123.5 H109.5 Z" fill="none" stroke="#949494" stroke-width="1.05"/><path d="M110.5,93.5 H144.5 V97.99 A63.90 63.90 0 0 0 111.05,122.5 H110.5 Z" fill="none" stroke="#d8d8d8" stroke-width="1.2"/><path d="M228.5,81.5 H170.5 V107.57 A51.90 51.90 0 0 1 209.25,134.5 H228.5 Z" fill="none" stroke="#000" stroke-width="1"/><path d="M228.0,82 H171.0 V107.14 A52.40 52.40 0 0 1 209.55,134 H228.0 Z" fill="#f6f6f6"/><path d="M227.5,82.5 H171.5 V106.71 A52.90 52.90 0 0 1 209.85,133.5 H227.5 Z" fill="none" stroke="#fff" stroke-width="1.05"/><path d="M226.5,83.5 H172.5 V105.86 A53.90 53.90 0 0 1 210.44,132.5 H226.5 Z" fill="none" stroke="#d4d4d4" stroke-width="1.05"/><path d="M225.5,84.5 H173.5 V105.02 A54.90 54.90 0 0 1 211.02,131.5 H225.5 Z" fill="none" stroke="#cccccc" stroke-width="1.05"/><path d="M224.5,85.5 H174.5 V104.19 A55.90 55.90 0 0 1 211.59,130.5 H224.5 Z" fill="none" stroke="#d8d8d8" stroke-width="1.05"/><path d="M223.5,86.5 H175.5 V103.38 A56.90 56.90 0 0 1 212.16,129.5 H223.5 Z" fill="none" stroke="#c0c0c0" stroke-width="1.05"/><path d="M222.5,87.5 H176.5 V102.58 A57.90 57.90 0 0 1 212.72,128.5 H222.5 Z" fill="none" stroke="#909090" stroke-width="1.05"/><path d="M221.5,88.5 H177.5 V101.79 A58.90 58.90 0 0 1 213.27,127.5 H221.5 Z" fill="none" stroke="#5a5a5a" stroke-width="1.05"/><path d="M220.5,89.5 H178.5 V101.01 A59.90 59.90 0 0 1 213.82,126.5 H220.5 Z" fill="none" stroke="#464646" stroke-width="1.05"/><path d="M219.5,90.5 H179.5 V100.24 A60.90 60.90 0 0 1 214.36,125.5 H219.5 Z" fill="none" stroke="#b8b8b8" stroke-width="1.05"/><path d="M218.5,91.5 H180.5 V99.48 A61.90 61.90 0 0 1 214.89,124.5 H218.5 Z" fill="none" stroke="#1c1c1c" stroke-width="1.05"/><path d="M217.5,92.5 H181.5 V98.73 A62.90 62.90 0 0 1 215.42,123.5 H217.5 Z" fill="none" stroke="#949494" stroke-width="1.05"/><path d="M216.5,93.5 H182.5 V97.99 A63.90 63.90 0 0 1 215.95,122.5 H216.5 Z" fill="none" stroke="#d8d8d8" stroke-width="1.2"/><path d="M98.5,387.5 H228.5 V475.5 H98.5 Z" fill="none" stroke="#000" stroke-width="1"/><path d="M99,388 H228 V475 H99 Z" fill="#f8f8f8"/><path d="M99.5,388.5 H227.5 V474.5 H99.5 Z" fill="none" stroke="#fff" stroke-width="1.05"/><path d="M100.5,389.5 H226.5 V473.5 H100.5 Z" fill="none" stroke="#d4d4d4" stroke-width="1.05"/><path d="M101.5,390.5 H225.5 V472.5 H101.5 Z" fill="none" stroke="#cccccc" stroke-width="1.05"/><path d="M102.5,391.5 H224.5 V471.5 H102.5 Z" fill="none" stroke="#d8d8d8" stroke-width="1.05"/><path d="M103.5,392.5 H223.5 V470.5 H103.5 Z" fill="none" stroke="#c0c0c0" stroke-width="1.05"/><path d="M104.5,393.5 H222.5 V469.5 H104.5 Z" fill="none" stroke="#909090" stroke-width="1.05"/><path d="M105.5,394.5 H221.5 V468.5 H105.5 Z" fill="none" stroke="#5a5a5a" stroke-width="1.05"/><path d="M106.5,395.5 H220.5 V467.5 H106.5 Z" fill="none" stroke="#464646" stroke-width="1.05"/><path d="M107.5,396.5 H219.5 V466.5 H107.5 Z" fill="none" stroke="#b8b8b8" stroke-width="1.05"/><path d="M108.5,397.5 H218.5 V465.5 H108.5 Z" fill="none" stroke="#1c1c1c" stroke-width="1.05"/><path d="M109.5,398.5 H217.5 V464.5 H109.5 Z" fill="none" stroke="#949494" stroke-width="1.05"/><clipPath id="lpc"><rect x="110" y="399" width="107" height="65"/></clipPath><g clip-path="url(#lpc)"><circle cx="110" cy="399" r="17" fill="#cbcbcb"/><circle cx="217" cy="399" r="17" fill="#cbcbcb"/><circle cx="110" cy="464" r="17" fill="#cbcbcb"/><circle cx="217" cy="464" r="17" fill="#cbcbcb"/></g><circle cx="163.60000000000002" cy="263.4" r="28.4" fill="none" stroke="#3a3a3a" stroke-width="1" stroke-dasharray="1.6 1.2"/><circle cx="163.60000000000002" cy="263.4" r="26.2" fill="none" stroke="#fff" stroke-width="3.4"/><circle cx="163.60000000000002" cy="263.4" r="24" fill="none" stroke="#505050" stroke-width="1.1"/><circle cx="163.60000000000002" cy="263.4" r="22.6" fill="none" stroke="#f4f4f4" stroke-width="2"/><circle cx="163.60000000000002" cy="263.4" r="21.5" fill="#0c0c0c"/><ellipse cx="163.60000000000002" cy="251.89999999999998" rx="4.8" ry="7.5" fill="url(#petal)" transform="rotate(15 163.60000000000002 263.4)"/><ellipse cx="163.60000000000002" cy="251.89999999999998" rx="4.8" ry="7.5" fill="url(#petal)" transform="rotate(45 163.60000000000002 263.4)"/><ellipse cx="163.60000000000002" cy="251.89999999999998" rx="4.8" ry="7.5" fill="url(#petal)" transform="rotate(75 163.60000000000002 263.4)"/><ellipse cx="163.60000000000002" cy="251.89999999999998" rx="4.8" ry="7.5" fill="url(#petal)" transform="rotate(105 163.60000000000002 263.4)"/><ellipse cx="163.60000000000002" cy="251.89999999999998" rx="4.8" ry="7.5" fill="url(#petal)" transform="rotate(135 163.60000000000002 263.4)"/><ellipse cx="163.60000000000002" cy="251.89999999999998" rx="4.8" ry="7.5" fill="url(#petal)" transform="rotate(165 163.60000000000002 263.4)"/><ellipse cx="163.60000000000002" cy="251.89999999999998" rx="4.8" ry="7.5" fill="url(#petal)" transform="rotate(195 163.60000000000002 263.4)"/><ellipse cx="163.60000000000002" cy="251.89999999999998" rx="4.8" ry="7.5" fill="url(#petal)" transform="rotate(225 163.60000000000002 263.4)"/><ellipse cx="163.60000000000002" cy="251.89999999999998" rx="4.8" ry="7.5" fill="url(#petal)" transform="rotate(255 163.60000000000002 263.4)"/><ellipse cx="163.60000000000002" cy="251.89999999999998" rx="4.8" ry="7.5" fill="url(#petal)" transform="rotate(285 163.60000000000002 263.4)"/><ellipse cx="163.60000000000002" cy="251.89999999999998" rx="4.8" ry="7.5" fill="url(#petal)" transform="rotate(315 163.60000000000002 263.4)"/><ellipse cx="163.60000000000002" cy="251.89999999999998" rx="4.8" ry="7.5" fill="url(#petal)" transform="rotate(345 163.60000000000002 263.4)"/><circle cx="163.60000000000002" cy="263.4" r="12" fill="url(#knobg)"/><circle cx="163.60000000000002" cy="263.4" r="4" fill="none" stroke="#d8d8d8" stroke-width="1"/><circle cx="163.60000000000002" cy="263.4" r="1.8" fill="#f0f0f0"/></svg>
<div style="position:absolute;left:1090px;top:43px;width:3px;height:705px;background:#f8f8f8"></div>
<div style="position:absolute;left:1093px;top:42px;width:1px;height:705px;background:#a0a0a0"></div>
<div style="position:absolute;left:1102px;top:45px;width:243px;height:15px;background:#33598c"></div>
<div class="t" style="left:1106px;top:46.84px;font-size:12px;line-height:12px;font-weight:bold;font-style:normal;color:#fff;letter-spacing:-0.1px">Vectors</div>
<div style="position:absolute;left:1327px;top:46px;width:13px;height:13px;background:#c4ccd8;border-top:1px solid #e8ecf0;border-left:1px solid #e8ecf0;border-right:1px solid #8090a8;border-bottom:1px solid #8090a8"></div>
<svg style="position:absolute;left:1327px;top:46px;" width="13" height="13" viewBox="0 0 13 13"><path d="M6.5 3 L10.5 10 L2.5 10 Z" fill="#445"/></svg>
<div style="position:absolute;left:1102px;top:61px;width:240px;height:22px;background:#fff;border-top:2px solid #707070;border-left:2px solid #707070;border-bottom:1px solid #f4f4f4;border-right:1px solid #f4f4f4"></div>
<div class="t" style="left:1105.5px;top:64.64px;font-size:12px;line-height:12px;font-weight:normal;font-style:normal;color:#111;">Default Sheet</div>
<div style="position:absolute;left:1324px;top:63px;width:17px;height:19px;background:#f0f0f0;border-top:1px solid #fff;border-left:1px solid #fff;border-right:1px solid #707070;border-bottom:2px solid #707070"></div>
<svg style="position:absolute;left:1327px;top:69px;" width="10" height="6" viewBox="0 0 10 6"><path d="M1 1 H8.5 L4.75 5Z" fill="#000"/></svg>
<svg style="position:absolute;left:1103px;top:90px;" width="18" height="18" viewBox="0 0 18 18"><path d="M10 9 H14 L12 15 H4 V14 H10Z" fill="#c8c8c8"/><path d="M1 2 H6 L10 7 V14 H1Z" fill="url(#gblue)"/><path d="M6 2 L10 7 H6Z" fill="#f4f4f4"/></svg>
<svg style="position:absolute;left:1140px;top:90px;" width="18" height="18" viewBox="0 0 18 18"><path d="M2 4 L9 3 L12 6 L12 10 L2 11 Z" fill="#f0e000"/><path d="M1 9 L16 7 L14 14 L2 15 Z" fill="#e8d800"/><path d="M2 13 L14 12" stroke="#b8a800" stroke-width="1"/><path d="M14 10 L17 12" stroke="#bbb" stroke-width="1"/></svg>
<svg style="position:absolute;left:1177px;top:90px;" width="18" height="18" viewBox="0 0 18 18"><rect x="1" y="2" width="12" height="13" rx="1" fill="#2a5cb0"/><rect x="3" y="2" width="8" height="6" fill="#d8dce8"/><rect x="4" y="10" width="6" height="5" fill="#c8d0e0"/><rect x="5" y="11" width="2" height="3" fill="#2a5cb0"/><path d="M13 13 H16" stroke="#aaa"/></svg>
<svg style="position:absolute;left:1213px;top:90px;" width="18" height="18" viewBox="0 0 18 18"><path d="M3 1 H9 L15 12 L13 16 H5 Z" fill="#c8a878"/><path d="M3 1 L2 3 L3 5 L2 7 L3 9 L2 11 L3 13 L5 16" stroke="#a88858" stroke-width=".8" fill="none"/><path d="M8 6 L13 13" stroke="#b09060" stroke-width="1"/></svg>
<svg style="position:absolute;left:1251px;top:90px;" width="18" height="18" viewBox="0 0 18 18"><rect x="1" y="0" width="11" height="15" fill="#8898b8"/><circle cx="6.5" cy="7" r="3.5" fill="#f8d830"/><rect x="5" y="10" width="3" height="3" fill="#333"/></svg>
<svg style="position:absolute;left:1290px;top:90px;" width="18" height="18" viewBox="0 0 18 18"><path d="M1 3 H10 L9 12 H2Z" fill="#3878d8"/><ellipse cx="5.5" cy="3" rx="4.5" ry="2" fill="#a8c8f0"/></svg>
<svg style="position:absolute;left:1322px;top:90px;" width="18" height="18" viewBox="0 0 18 18"><rect x="0" y="0" width="18" height="17" fill="#f8f0d8" stroke="#c8b898" stroke-width=".8"/><path d="M6 3 C3 3 2 5 2 7.5 C2 9.5 3.5 10.5 4 12 H8 C8.5 10.5 10 9.5 10 7.5 C10 5 9 3 6 3Z" fill="#f0c010"/><path d="M12 2 C9 2 8 4 8 6.5 C8 8.5 9.5 9.5 10 11 H14 C14.5 9.5 16 8.5 16 6.5 C16 4 15 2 12 2Z" fill="#f8d830"/><rect x="4" y="12" width="4" height="4" fill="#202020"/><rect x="10" y="11" width="4" height="4" fill="#202020"/></svg>
<div style="position:absolute;left:1102px;top:112px;width:243px;height:26px;background:#d9d9d9"></div>
<div style="position:absolute;left:1106px;top:117px;width:17px;height:17px;background:#ececec;border-top:1px solid #fff;border-left:1px solid #fff;border-right:1px solid #a0a0a0;border-bottom:1px solid #a0a0a0"></div>
<svg style="position:absolute;left:1106px;top:117px;" width="17" height="17" viewBox="0 0 17 17"><circle cx="8.5" cy="8.5" r="6.5" fill="#000"/></svg>
<div class="t" style="left:1128.5px;top:119.84px;font-size:12px;line-height:12px;font-weight:normal;font-style:normal;color:#111;">Default Layer</div>
<div style="position:absolute;left:1287px;top:116px;width:17px;height:18px;background:linear-gradient(135deg,#e8e8e8,#a8a8a8);border:1px solid #e0e0e0"></div>
<svg style="position:absolute;left:1287px;top:116px;" width="17" height="18" viewBox="0 0 17 18"><path d="M5 12 C4 6 6 3 9 3 C12 3 13 6 12 9 C11 11 10 12 10 14" fill="none" stroke="#777" stroke-width="1.6"/><path d="M8.5 10 V16 M6.5 12.5 L8.5 10 L10.5 12.5" stroke="#111" stroke-width="1.6" fill="none"/></svg>
<div style="position:absolute;left:1305px;top:116px;width:17px;height:18px;background:#e4e4e4;border-left:1px dashed #000;border-bottom:1px dashed #000"></div>
<svg style="position:absolute;left:1305px;top:116px;" width="17" height="18" viewBox="0 0 17 18"><path d="M15 2 L6 11 L4 14 L8 13 L15 5Z" fill="#000"/></svg>
<svg style="position:absolute;left:1323px;top:116px;" width="18" height="18" viewBox="0 0 18 18"><rect x="0" y="0" width="17" height="17" fill="#e8e8e8" stroke="#c8c8c8" stroke-width=".8"/><path d="M8.5 2 C5 2 3.5 4.5 3.5 7 C3.5 9 5.5 10.5 6 12 H11 C11.5 10.5 13.5 9 13.5 7 C13.5 4.5 12 2 8.5 2Z" fill="#f8d020"/><circle cx="7" cy="5.5" r="1.5" fill="#fff8c0"/><rect x="6" y="12" width="5" height="3.5" fill="#202020"/></svg>
<div style="position:absolute;left:1312px;top:141px;width:12px;height:12px;background:linear-gradient(135deg,#3a68b8,#0a2a78);border-radius:1.5px"></div>
<svg style="position:absolute;left:1312px;top:141px;" width="12" height="12" viewBox="0 0 12 12"><path d="M6 10 V3.5 M3 6.5 L6 3.5 L9 6.5" stroke="#fff" stroke-width="1.8" fill="none"/></svg>
<div style="position:absolute;left:1330px;top:141px;width:12px;height:12px;background:linear-gradient(135deg,#3a68b8,#0a2a78);border-radius:1.5px"></div>
<svg style="position:absolute;left:1330px;top:141px;" width="12" height="12" viewBox="0 0 12 12"><path d="M6 2 V8.5 M3 5.5 L6 8.5 L9 5.5" stroke="#fff" stroke-width="1.8" fill="none"/></svg>
<div style="position:absolute;left:1102px;top:172px;width:243px;height:15px;background:#33598c"></div>
<div class="t" style="left:1106px;top:173.84px;font-size:12px;line-height:12px;font-weight:bold;font-style:normal;color:#fff;letter-spacing:-0.1px">Bitmaps</div>
<div style="position:absolute;left:1327px;top:173px;width:13px;height:13px;background:#c4ccd8;border-top:1px solid #e8ecf0;border-left:1px solid #e8ecf0;border-right:1px solid #8090a8;border-bottom:1px solid #8090a8"></div>
<svg style="position:absolute;left:1327px;top:173px;" width="13" height="13" viewBox="0 0 13 13"><path d="M2.5 3.5 L10.5 3.5 L6.5 10.5 Z" fill="#445"/></svg>
<div style="position:absolute;left:1102px;top:203px;width:243px;height:15px;background:#33598c"></div>
<div class="t" style="left:1106px;top:204.84px;font-size:12px;line-height:12px;font-weight:bold;font-style:normal;color:#fff;letter-spacing:-0.1px">Reliefs</div>
<div style="position:absolute;left:1327px;top:204px;width:13px;height:13px;background:#c4ccd8;border-top:1px solid #e8ecf0;border-left:1px solid #e8ecf0;border-right:1px solid #8090a8;border-bottom:1px solid #8090a8"></div>
<svg style="position:absolute;left:1327px;top:204px;" width="13" height="13" viewBox="0 0 13 13"><path d="M6.5 3 L10.5 10 L2.5 10 Z" fill="#445"/></svg>
<div style="position:absolute;left:1102px;top:219px;width:240px;height:22px;background:#fff;border-top:2px solid #707070;border-left:2px solid #707070;border-bottom:1px solid #f4f4f4;border-right:1px solid #f4f4f4"></div>
<div class="t" style="left:1105.5px;top:222.64px;font-size:12px;line-height:12px;font-weight:normal;font-style:normal;color:#111;">Front Relief</div>
<div style="position:absolute;left:1324px;top:221px;width:17px;height:19px;background:#f0f0f0;border-top:1px solid #fff;border-left:1px solid #fff;border-right:1px solid #707070;border-bottom:2px solid #707070"></div>
<svg style="position:absolute;left:1327px;top:227px;" width="10" height="6" viewBox="0 0 10 6"><path d="M1 1 H8.5 L4.75 5Z" fill="#000"/></svg>
<svg style="position:absolute;left:1103px;top:248px;" width="18" height="18" viewBox="0 0 18 18"><path d="M10 9 H14 L12 15 H4 V14 H10Z" fill="#c8c8c8"/><path d="M1 2 H6 L10 7 V14 H1Z" fill="url(#gblue)"/><path d="M6 2 L10 7 H6Z" fill="#f4f4f4"/></svg>
<svg style="position:absolute;left:1130px;top:248px;" width="18" height="18" viewBox="0 0 18 18"><path d="M2 4 L9 3 L12 6 L12 10 L2 11 Z" fill="#f0e000"/><path d="M1 9 L16 7 L14 14 L2 15 Z" fill="#e8d800"/><path d="M2 13 L14 12" stroke="#b8a800" stroke-width="1"/><path d="M14 10 L17 12" stroke="#bbb" stroke-width="1"/></svg>
<svg style="position:absolute;left:1157px;top:248px;" width="18" height="18" viewBox="0 0 18 18"><rect x="1" y="2" width="12" height="13" rx="1" fill="#2a5cb0"/><rect x="3" y="2" width="8" height="6" fill="#d8dce8"/><rect x="4" y="10" width="6" height="5" fill="#c8d0e0"/><rect x="5" y="11" width="2" height="3" fill="#2a5cb0"/><path d="M13 13 H16" stroke="#aaa"/></svg>
<svg style="position:absolute;left:1184px;top:248px;" width="18" height="18" viewBox="0 0 18 18"><path d="M3 1 H9 L15 12 L13 16 H5 Z" fill="#c8a878"/><path d="M3 1 L2 3 L3 5 L2 7 L3 9 L2 11 L3 13 L5 16" stroke="#a88858" stroke-width=".8" fill="none"/><path d="M8 6 L13 13" stroke="#b09060" stroke-width="1"/></svg>
<svg style="position:absolute;left:1212px;top:248px;" width="18" height="18" viewBox="0 0 18 18"><path d="M8 1 L16 6 L8 11 L0 6Z" fill="#7080d0"/><path d="M0 8 L8 13 L16 8 V11 L8 16 L0 11Z" fill="#c02020"/><path d="M6 5 H10 V8 L8 10 L6 8Z" fill="#f0c020"/></svg>
<svg style="position:absolute;left:1241px;top:248px;" width="18" height="18" viewBox="0 0 18 18"><rect x="1" y="0" width="11" height="15" fill="#8898b8"/><circle cx="6.5" cy="7" r="3.5" fill="#f8d830"/><rect x="5" y="10" width="3" height="3" fill="#333"/></svg>
<svg style="position:absolute;left:1268px;top:248px;" width="18" height="18" viewBox="0 0 18 18"><rect x="0" y="0" width="16" height="16" fill="#000"/><circle cx="8" cy="5" r="3" fill="#aaa"/><ellipse cx="8" cy="11" rx="5" ry="4" fill="#ccc"/></svg>
<svg style="position:absolute;left:1299px;top:248px;" width="18" height="18" viewBox="0 0 18 18"><path d="M1 3 H10 L9 12 H2Z" fill="#3878d8"/><ellipse cx="5.5" cy="3" rx="4.5" ry="2" fill="#a8c8f0"/></svg>
<svg style="position:absolute;left:1322px;top:248px;" width="18" height="18" viewBox="0 0 18 18"><rect x="0" y="0" width="18" height="17" fill="#f8f0d8" stroke="#c8b898" stroke-width=".8"/><path d="M6 3 C3 3 2 5 2 7.5 C2 9.5 3.5 10.5 4 12 H8 C8.5 10.5 10 9.5 10 7.5 C10 5 9 3 6 3Z" fill="#f0c010"/><path d="M12 2 C9 2 8 4 8 6.5 C8 8.5 9.5 9.5 10 11 H14 C14.5 9.5 16 8.5 16 6.5 C16 4 15 2 12 2Z" fill="#f8d830"/><rect x="4" y="12" width="4" height="4" fill="#202020"/><rect x="10" y="11" width="4" height="4" fill="#202020"/></svg>
<div style="position:absolute;left:1102px;top:270px;width:243px;height:26px;background:#d9d9d9"></div>
<svg style="position:absolute;left:1110px;top:273px;" width="26" height="22" viewBox="0 0 26 22"><path d="M3 12 C5 2 18 0 22 8 L20 12 C16 6 8 6 6 14Z" fill="#d8b860"/><path d="M3 12 C6 8 14 6 19 10 L20 13 C14 10 8 10 6 14Z" fill="#6870b8"/><path d="M2 17 H8 M5 14 V20" stroke="#000" stroke-width="1.2"/></svg>
<svg style="position:absolute;left:1138px;top:278px;" width="6" height="10" viewBox="0 0 6 10"><path d="M1 1 L5 5 L1 9Z" fill="#000"/></svg>
<div class="t" style="left:1149px;top:277.84px;font-size:12px;line-height:12px;font-weight:normal;font-style:normal;color:#111;">Relief Layer 1</div>
<svg style="position:absolute;left:1323px;top:274px;" width="18" height="18" viewBox="0 0 18 18"><rect x="0" y="0" width="17" height="17" fill="#e8e8e8" stroke="#c8c8c8" stroke-width=".8"/><path d="M8.5 2 C5 2 3.5 4.5 3.5 7 C3.5 9 5.5 10.5 6 12 H11 C11.5 10.5 13.5 9 13.5 7 C13.5 4.5 12 2 8.5 2Z" fill="#f8d020"/><circle cx="7" cy="5.5" r="1.5" fill="#fff8c0"/><rect x="6" y="12" width="5" height="3.5" fill="#202020"/></svg>
<div style="position:absolute;left:1312px;top:299px;width:12px;height:12px;background:linear-gradient(135deg,#3a68b8,#0a2a78);border-radius:1.5px"></div>
<svg style="position:absolute;left:1312px;top:299px;" width="12" height="12" viewBox="0 0 12 12"><path d="M6 10 V3.5 M3 6.5 L6 3.5 L9 6.5" stroke="#fff" stroke-width="1.8" fill="none"/></svg>
<div style="position:absolute;left:1330px;top:299px;width:12px;height:12px;background:linear-gradient(135deg,#3a68b8,#0a2a78);border-radius:1.5px"></div>
<svg style="position:absolute;left:1330px;top:299px;" width="12" height="12" viewBox="0 0 12 12"><path d="M6 2 V8.5 M3 5.5 L6 8.5 L9 5.5" stroke="#fff" stroke-width="1.8" fill="none"/></svg>
<div style="position:absolute;left:1094px;top:721px;width:272px;height:26px;background:#dadada;background-image:radial-gradient(#eaeaea 0.9px, transparent 1.2px),radial-gradient(#c8c8c8 0.8px, transparent 1px);background-size:5px 4px,3px 3px;background-position:0 0,1px 2px"></div>
<div style="position:absolute;left:1191px;top:721px;width:175px;height:1px;background:#a0a0a0"></div>
<div style="position:absolute;left:1365px;top:43px;width:1px;height:678px;background:#a0a0a0"></div>
<div style="position:absolute;left:1094px;top:721px;width:49px;height:26px;background:#f0f0f0"></div>
<div style="position:absolute;left:1143px;top:721px;width:49px;height:26px;background:#f2f2f2;border-left:1px solid #a0a0a0;border-top:1px solid #a0a0a0;border-right:1px solid #d0d0d0;border-radius:0 0 4px 4px"></div>
<div class="t" style="left:1103.5px;top:726.84px;font-size:12px;line-height:12px;font-weight:normal;font-style:normal;color:#111;">Layers</div>
<div class="t" style="left:1151.5px;top:726.84px;font-size:12px;line-height:12px;font-weight:normal;font-style:normal;color:#111;">Add In</div>
<div style="position:absolute;left:1090px;top:747px;width:276px;height:1px;background:#a0a0a0"></div>
<div style="position:absolute;left:0px;top:748px;width:1366px;height:20px;background:#f0f0f0"></div>
<div style="position:absolute;left:1023px;top:751px;width:66px;height:17px;border-top:1px solid #a0a0a0;border-left:1px solid #a0a0a0;background:#f0f0f0"></div>
<div style="position:absolute;left:1092px;top:751px;width:66px;height:17px;border-top:1px solid #a0a0a0;border-left:1px solid #a0a0a0;background:#f0f0f0"></div>
<div style="position:absolute;left:1161px;top:751px;width:60px;height:17px;border-top:1px solid #a0a0a0;border-left:1px solid #a0a0a0;background:#f0f0f0"></div>
<div style="position:absolute;left:1224px;top:751px;width:70px;height:17px;border-top:1px solid #a0a0a0;border-left:1px solid #a0a0a0;background:#f0f0f0"></div>
<div style="position:absolute;left:1297px;top:751px;width:69px;height:17px;border-top:1px solid #a0a0a0;border-left:1px solid #a0a0a0;background:#f0f0f0"></div>
<div class="t" style="left:1025.4px;top:753.84px;font-size:12px;line-height:12px;font-weight:normal;font-style:normal;color:#111;letter-spacing:-0.55px">X: 1466.850</div>
<div class="t" style="left:1094.5px;top:753.84px;font-size:12px;line-height:12px;font-weight:normal;font-style:normal;color:#111;letter-spacing:-0.4px">Y: -788.571</div></body></html>
